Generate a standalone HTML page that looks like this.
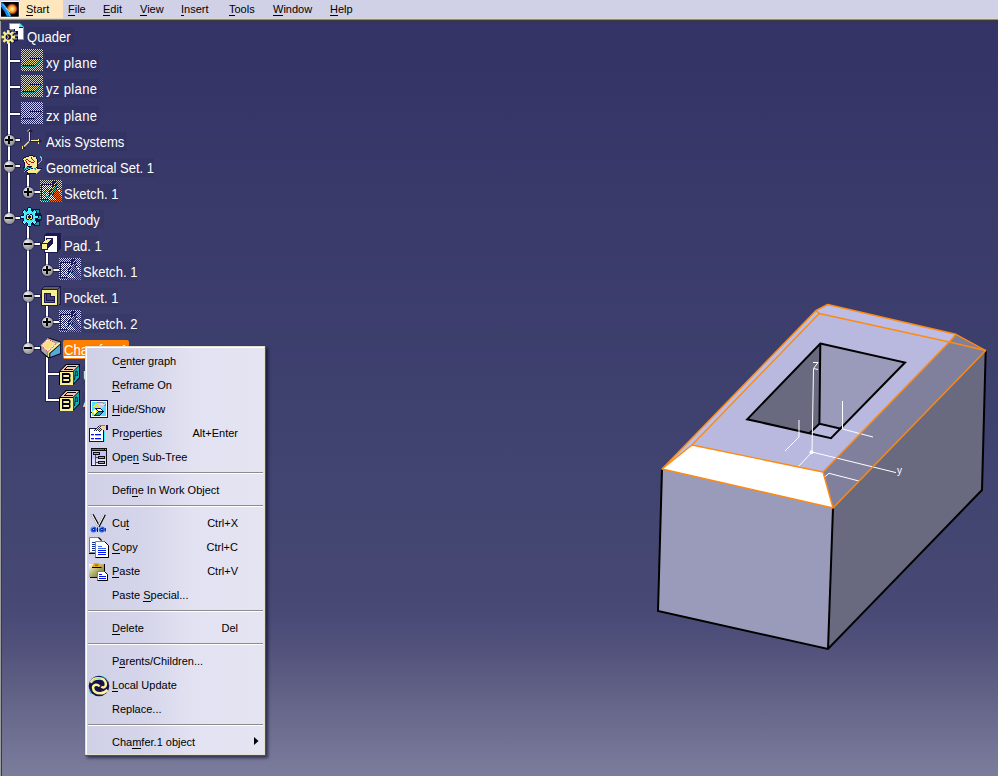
<!DOCTYPE html>
<html><head><meta charset="utf-8">
<style>
*{margin:0;padding:0;box-sizing:border-box}
html,body{width:998px;height:776px;overflow:hidden}
body{position:relative;font-family:"Liberation Sans",sans-serif;background:#333366}
.abs{position:absolute}
#menubar{position:absolute;left:0;top:0;width:998px;height:18px;background:#d0d0e6;font-size:11px;color:#000}
#menubar span{position:absolute;top:3px;white-space:pre}
#menubar u{text-decoration:none;border-bottom:1px solid #000}
#mb1{position:absolute;left:0;top:18px;width:998px;height:1px;background:#dcd8cc}
#mb2{position:absolute;left:0;top:19px;width:998px;height:1px;background:#8c8c88}
#mb3{position:absolute;left:0;top:20px;width:998px;height:1px;background:#3c3c3c}
#view{position:absolute;left:2px;top:21px;width:996px;height:755px;
 background:linear-gradient(to bottom,#333366 0px,#393a6a 179px,#3e406e 379px,#474974 579px,#4a4b77 599px,#52527c 629px,#646488 679px,#737396 725px,#7c7d9c 755px)}
#lb1{position:absolute;left:0;top:19px;width:1px;height:757px;background:#9c9c9c}
#lb2{position:absolute;left:1px;top:20px;width:1px;height:756px;background:#3c3c3c}
.tl{position:absolute;background:#fff}
.lbl{position:absolute;height:19px;background:rgba(0,0,20,0.06);color:#fff;font-size:15px;line-height:19px;white-space:pre}
.lbl .tx{position:absolute;left:1px;top:0;transform:scaleX(0.87);transform-origin:0 0}
.lbl.sel{background:#ff8000;border-radius:2px}
.lbl u{text-decoration:none;border-bottom:1px solid #fff}
.pl{letter-spacing:0.4px}
.tls{position:absolute;background:rgba(16,16,64,0.6)}
.node{position:absolute;width:11px;height:11px;border-radius:50%;background:radial-gradient(circle at 35% 30%,#f4f4f4 0%,#bcbcbc 35%,#8c8c8c 75%,#606060 100%);box-shadow:0 0 0 1px rgba(16,16,64,0.45)}
.node:before{content:"";position:absolute;left:1px;top:4px;width:8px;height:2px;background:#000}
.node.plus:after{content:"";position:absolute;left:4px;top:1px;width:2px;height:8px;background:#000}
#cm{position:absolute;left:85px;top:346px;width:181px;height:410px;background:#505050;box-shadow:2px 2px 3px rgba(0,0,30,0.6)}
#cmi{position:absolute;left:0;top:0;width:180px;height:409px;background:#e4e0d0}
#cmw{position:absolute;left:1px;top:1px;width:178px;height:407px;background:#fff}
#cmb{position:absolute;left:2px;top:2px;width:177px;height:406px;background:linear-gradient(to right,#d0d0e6 0%,#d4d4ea 30%,#e2e2f2 60%,#e4e4f2 100%)}
.mi{position:absolute;left:85px;width:180px;height:24px;font-size:11px;color:#000}
.mi .t{position:absolute;left:27px;top:6px;white-space:pre}
.mi .k{position:absolute;right:27px;top:6px;white-space:pre}
.mi u{text-decoration:none;border-bottom:1px solid #000}
.sep{position:absolute;left:88px;width:175px;height:2px;border-top:1px solid #8c8c8c;border-bottom:1px solid #fff}
</style></head><body>
<div id="view"></div>
<div id="lb1"></div><div id="lb2"></div>
<div id="menubar">
<svg class="abs" style="left:0;top:0" width="20" height="19" viewBox="0 0 20 19">
 <defs><radialGradient id="flame" cx="0.5" cy="0.5" r="0.5"><stop offset="0" stop-color="#fff4d0"/><stop offset="0.3" stop-color="#ffd040"/><stop offset="0.65" stop-color="#e87020"/><stop offset="0.9" stop-color="#802040" stop-opacity="0.6"/><stop offset="1" stop-color="#000" stop-opacity="0"/></radialGradient><clipPath id="lclip"><rect x="1" y="2" width="17.8" height="14.8"/></clipPath></defs>
 <rect x="0.5" y="1" width="19.3" height="17" rx="1.5" fill="#fff"/>
 <rect x="1" y="2" width="17.8" height="14.8" rx="0.5" fill="#000"/>
 <g clip-path="url(#lclip)">
 <circle cx="12" cy="9" r="6" fill="url(#flame)"/>
 <path d="M0.5,3.5 Q6,8 9.5,17.5" fill="none" stroke="#1888e8" stroke-width="4"/>
 <path d="M2.5,4 Q7,8.5 10,16" fill="none" stroke="#40c0ff" stroke-width="1.2"/>
 <path d="M6,8 Q8.5,10 10,12" fill="none" stroke="#fff0e0" stroke-width="1" opacity="0.7"/>
 </g>
</svg>
 <div class="abs" style="left:20px;top:0;width:43px;height:18px;background:#ffe6bc"></div>
 <span style="left:26px"><u>S</u>tart</span>
 <span style="left:68px"><u>F</u>ile</span>
 <span style="left:103px"><u>E</u>dit</span>
 <span style="left:140px"><u>V</u>iew</span>
 <span style="left:181px"><u>I</u>nsert</span>
 <span style="left:229px"><u>T</u>ools</span>
 <span style="left:273px"><u>W</u>indow</span>
 <span style="left:330px"><u>H</u>elp</span>
</div>
<div id="mb1"></div><div id="mb2"></div><div id="mb3"></div>

<!-- TREE -->
<svg width="0" height="0" style="position:absolute">
<defs>
<!--PIX-->
<pattern id="pG" width="2" height="2" patternUnits="userSpaceOnUse"><rect width="2" height="2" fill="#1c1c58"/><rect width="1" height="1" fill="#d4d4cc"/><rect x="1" y="1" width="1" height="1" fill="#d4d4cc"/></pattern><pattern id="pW" width="2" height="2" patternUnits="userSpaceOnUse"><rect width="2" height="2" fill="#1c1c58"/><rect width="1" height="1" fill="#ffffff"/><rect x="1" y="1" width="1" height="1" fill="#ffffff"/></pattern><pattern id="pY" width="2" height="2" patternUnits="userSpaceOnUse"><rect width="2" height="2" fill="#1c1c58"/><rect width="1" height="1" fill="#f4e070"/><rect x="1" y="1" width="1" height="1" fill="#f4e070"/></pattern><pattern id="pO" width="2" height="2" patternUnits="userSpaceOnUse"><rect width="2" height="2" fill="#1c1c58"/><rect width="1" height="1" fill="#ff7010"/><rect x="1" y="1" width="1" height="1" fill="#ff7010"/></pattern><pattern id="pC" width="2" height="2" patternUnits="userSpaceOnUse"><rect width="2" height="2" fill="#1c1c58"/><rect width="1" height="1" fill="#30c0c0"/><rect x="1" y="1" width="1" height="1" fill="#30c0c0"/></pattern><pattern id="pP" width="2" height="2" patternUnits="userSpaceOnUse"><rect width="2" height="2" fill="#303030"/><rect width="1" height="1" fill="#f8d0a8"/><rect x="1" y="1" width="1" height="1" fill="#f8d0a8"/></pattern>
<symbol id="i-plane" viewBox="0 0 22 22" shape-rendering="crispEdges"><rect x="0" y="0" width="22" height="1" fill="url(#pG)"/><rect x="0" y="1" width="22" height="1" fill="url(#pG)"/><rect x="0" y="2" width="22" height="1" fill="url(#pG)"/><rect x="0" y="3" width="22" height="1" fill="url(#pG)"/><rect x="0" y="4" width="22" height="1" fill="url(#pG)"/><rect x="0" y="5" width="22" height="1" fill="url(#pG)"/><rect x="0" y="6" width="22" height="1" fill="url(#pG)"/><rect x="0" y="7" width="22" height="1" fill="url(#pG)"/><rect x="0" y="8" width="22" height="1" fill="url(#pG)"/><rect x="0" y="9" width="8" height="1" fill="url(#pG)"/><rect x="8" y="9" width="13" height="1" fill="#1c1c58"/><rect x="21" y="9" width="1" height="1" fill="url(#pG)"/><rect x="0" y="10" width="7" height="1" fill="url(#pG)"/><rect x="7" y="10" width="1" height="1" fill="#1c1c58"/><rect x="8" y="10" width="11" height="1" fill="url(#pY)"/><rect x="19" y="10" width="1" height="1" fill="#1c1c58"/><rect x="20" y="10" width="1" height="1" fill="#30c8c8"/><rect x="21" y="10" width="1" height="1" fill="url(#pG)"/><rect x="0" y="11" width="6" height="1" fill="url(#pG)"/><rect x="6" y="11" width="1" height="1" fill="#1c1c58"/><rect x="7" y="11" width="11" height="1" fill="url(#pY)"/><rect x="18" y="11" width="1" height="1" fill="#1c1c58"/><rect x="19" y="11" width="1" height="1" fill="#30c8c8"/><rect x="20" y="11" width="2" height="1" fill="url(#pG)"/><rect x="0" y="12" width="5" height="1" fill="url(#pG)"/><rect x="5" y="12" width="1" height="1" fill="#1c1c58"/><rect x="6" y="12" width="11" height="1" fill="url(#pY)"/><rect x="17" y="12" width="1" height="1" fill="#1c1c58"/><rect x="18" y="12" width="1" height="1" fill="#30c8c8"/><rect x="19" y="12" width="3" height="1" fill="url(#pG)"/><rect x="0" y="13" width="4" height="1" fill="url(#pG)"/><rect x="4" y="13" width="1" height="1" fill="#1c1c58"/><rect x="5" y="13" width="11" height="1" fill="url(#pY)"/><rect x="16" y="13" width="1" height="1" fill="#1c1c58"/><rect x="17" y="13" width="1" height="1" fill="#30c8c8"/><rect x="18" y="13" width="4" height="1" fill="url(#pG)"/><rect x="0" y="14" width="3" height="1" fill="url(#pG)"/><rect x="3" y="14" width="1" height="1" fill="#1c1c58"/><rect x="4" y="14" width="11" height="1" fill="url(#pY)"/><rect x="15" y="14" width="1" height="1" fill="#1c1c58"/><rect x="16" y="14" width="1" height="1" fill="#30c8c8"/><rect x="17" y="14" width="5" height="1" fill="url(#pG)"/><rect x="0" y="15" width="2" height="1" fill="url(#pG)"/><rect x="2" y="15" width="1" height="1" fill="#1c1c58"/><rect x="3" y="15" width="11" height="1" fill="url(#pY)"/><rect x="14" y="15" width="1" height="1" fill="#1c1c58"/><rect x="15" y="15" width="1" height="1" fill="#30c8c8"/><rect x="16" y="15" width="6" height="1" fill="url(#pG)"/><rect x="0" y="16" width="1" height="1" fill="url(#pG)"/><rect x="1" y="16" width="13" height="1" fill="#1c1c58"/><rect x="14" y="16" width="1" height="1" fill="#30c8c8"/><rect x="15" y="16" width="7" height="1" fill="url(#pG)"/><rect x="0" y="17" width="1" height="1" fill="url(#pG)"/><rect x="1" y="17" width="12" height="1" fill="url(#pC)"/><rect x="13" y="17" width="1" height="1" fill="#30c8c8"/><rect x="14" y="17" width="8" height="1" fill="url(#pG)"/><rect x="0" y="18" width="22" height="1" fill="url(#pG)"/><rect x="0" y="19" width="22" height="1" fill="url(#pG)"/><rect x="0" y="20" width="22" height="1" fill="url(#pG)"/><rect x="0" y="21" width="22" height="1" fill="url(#pG)"/></symbol>
<symbol id="i-sketch" viewBox="0 0 22 22" shape-rendering="crispEdges"><rect x="0" y="0" width="22" height="1" fill="url(#pG)"/><rect x="0" y="1" width="13" height="1" fill="url(#pG)"/><rect x="13" y="1" width="4" height="1" fill="#1c1c58"/><rect x="17" y="1" width="5" height="1" fill="url(#pG)"/><rect x="0" y="2" width="12" height="1" fill="url(#pG)"/><rect x="12" y="2" width="4" height="1" fill="#1c1c58"/><rect x="16" y="2" width="6" height="1" fill="url(#pG)"/><rect x="0" y="3" width="13" height="1" fill="url(#pG)"/><rect x="13" y="3" width="2" height="1" fill="#1c1c58"/><rect x="15" y="3" width="1" height="1" fill="#f4e070"/><rect x="16" y="3" width="1" height="1" fill="#1c1c58"/><rect x="17" y="3" width="1" height="1" fill="#30c8c8"/><rect x="18" y="3" width="4" height="1" fill="url(#pG)"/><rect x="0" y="4" width="1" height="1" fill="url(#pG)"/><rect x="1" y="4" width="13" height="1" fill="#1c1c58"/><rect x="14" y="4" width="1" height="1" fill="#f4e070"/><rect x="15" y="4" width="2" height="1" fill="#1c1c58"/><rect x="17" y="4" width="5" height="1" fill="url(#pG)"/><rect x="0" y="5" width="1" height="1" fill="url(#pG)"/><rect x="1" y="5" width="1" height="1" fill="#1c1c58"/><rect x="2" y="5" width="10" height="1" fill="url(#pW)"/><rect x="12" y="5" width="5" height="1" fill="#1c1c58"/><rect x="17" y="5" width="5" height="1" fill="url(#pG)"/><rect x="0" y="6" width="1" height="1" fill="url(#pG)"/><rect x="1" y="6" width="1" height="1" fill="#1c1c58"/><rect x="2" y="6" width="10" height="1" fill="url(#pW)"/><rect x="12" y="6" width="2" height="1" fill="#1c1c58"/><rect x="14" y="6" width="1" height="1" fill="#f4e070"/><rect x="15" y="6" width="1" height="1" fill="#1c1c58"/><rect x="16" y="6" width="1" height="1" fill="#30c8c8"/><rect x="17" y="6" width="1" height="1" fill="#1c1c58"/><rect x="18" y="6" width="4" height="1" fill="url(#pG)"/><rect x="0" y="7" width="1" height="1" fill="url(#pG)"/><rect x="1" y="7" width="1" height="1" fill="#1c1c58"/><rect x="2" y="7" width="10" height="1" fill="url(#pW)"/><rect x="12" y="7" width="1" height="1" fill="#1c1c58"/><rect x="13" y="7" width="1" height="1" fill="#f4e070"/><rect x="14" y="7" width="1" height="1" fill="#1c1c58"/><rect x="15" y="7" width="1" height="1" fill="#30c8c8"/><rect x="16" y="7" width="2" height="1" fill="#1c1c58"/><rect x="18" y="7" width="4" height="1" fill="url(#pG)"/><rect x="0" y="8" width="1" height="1" fill="url(#pG)"/><rect x="1" y="8" width="1" height="1" fill="#1c1c58"/><rect x="2" y="8" width="9" height="1" fill="url(#pW)"/><rect x="11" y="8" width="1" height="1" fill="#1c1c58"/><rect x="12" y="8" width="1" height="1" fill="#f4e070"/><rect x="13" y="8" width="1" height="1" fill="#1c1c58"/><rect x="14" y="8" width="1" height="1" fill="#30c8c8"/><rect x="15" y="8" width="2" height="1" fill="#1c1c58"/><rect x="17" y="8" width="1" height="1" fill="#ffffff"/><rect x="18" y="8" width="4" height="1" fill="url(#pG)"/><rect x="0" y="9" width="1" height="1" fill="url(#pG)"/><rect x="1" y="9" width="1" height="1" fill="#1c1c58"/><rect x="2" y="9" width="5" height="1" fill="url(#pW)"/><rect x="7" y="9" width="1" height="1" fill="#30c8c8"/><rect x="8" y="9" width="2" height="1" fill="url(#pW)"/><rect x="10" y="9" width="3" height="1" fill="#1c1c58"/><rect x="13" y="9" width="1" height="1" fill="#30c8c8"/><rect x="14" y="9" width="1" height="1" fill="#1c1c58"/><rect x="15" y="9" width="7" height="1" fill="url(#pO)"/><rect x="0" y="10" width="1" height="1" fill="url(#pG)"/><rect x="1" y="10" width="1" height="1" fill="#1c1c58"/><rect x="2" y="10" width="4" height="1" fill="url(#pW)"/><rect x="6" y="10" width="1" height="1" fill="#f4e070"/><rect x="7" y="10" width="1" height="1" fill="url(#pW)"/><rect x="8" y="10" width="1" height="1" fill="#f4e070"/><rect x="9" y="10" width="1" height="1" fill="url(#pW)"/><rect x="10" y="10" width="2" height="1" fill="#1c1c58"/><rect x="12" y="10" width="1" height="1" fill="#f4e070"/><rect x="13" y="10" width="1" height="1" fill="#1c1c58"/><rect x="14" y="10" width="1" height="1" fill="#30c8c8"/><rect x="15" y="10" width="3" height="1" fill="url(#pO)"/><rect x="18" y="10" width="2" height="1" fill="#ffffff"/><rect x="20" y="10" width="2" height="1" fill="url(#pO)"/><rect x="0" y="11" width="1" height="1" fill="url(#pG)"/><rect x="1" y="11" width="1" height="1" fill="#1c1c58"/><rect x="2" y="11" width="3" height="1" fill="url(#pW)"/><rect x="5" y="11" width="1" height="1" fill="#30c8c8"/><rect x="6" y="11" width="3" height="1" fill="url(#pW)"/><rect x="9" y="11" width="2" height="1" fill="#1c1c58"/><rect x="11" y="11" width="1" height="1" fill="#f4e070"/><rect x="12" y="11" width="1" height="1" fill="#1c1c58"/><rect x="13" y="11" width="1" height="1" fill="#30c8c8"/><rect x="14" y="11" width="1" height="1" fill="#1c1c58"/><rect x="15" y="11" width="4" height="1" fill="url(#pO)"/><rect x="19" y="11" width="3" height="1" fill="url(#pG)"/><rect x="0" y="12" width="1" height="1" fill="url(#pG)"/><rect x="1" y="12" width="1" height="1" fill="#1c1c58"/><rect x="2" y="12" width="2" height="1" fill="url(#pW)"/><rect x="4" y="12" width="1" height="1" fill="#30c8c8"/><rect x="5" y="12" width="4" height="1" fill="url(#pW)"/><rect x="9" y="12" width="1" height="1" fill="#1c1c58"/><rect x="10" y="12" width="1" height="1" fill="#f4e070"/><rect x="11" y="12" width="1" height="1" fill="#1c1c58"/><rect x="12" y="12" width="1" height="1" fill="#30c8c8"/><rect x="13" y="12" width="1" height="1" fill="#1c1c58"/><rect x="14" y="12" width="5" height="1" fill="url(#pO)"/><rect x="19" y="12" width="3" height="1" fill="url(#pG)"/><rect x="0" y="13" width="1" height="1" fill="url(#pG)"/><rect x="1" y="13" width="1" height="1" fill="#1c1c58"/><rect x="2" y="13" width="7" height="1" fill="url(#pW)"/><rect x="9" y="13" width="3" height="1" fill="#1c1c58"/><rect x="12" y="13" width="1" height="1" fill="#30c8c8"/><rect x="13" y="13" width="1" height="1" fill="#1c1c58"/><rect x="14" y="13" width="5" height="1" fill="url(#pO)"/><rect x="19" y="13" width="3" height="1" fill="url(#pG)"/><rect x="0" y="14" width="1" height="1" fill="url(#pG)"/><rect x="1" y="14" width="1" height="1" fill="#1c1c58"/><rect x="2" y="14" width="2" height="1" fill="url(#pW)"/><rect x="4" y="14" width="1" height="1" fill="#f4e070"/><rect x="5" y="14" width="4" height="1" fill="url(#pW)"/><rect x="9" y="14" width="2" height="1" fill="#1c1c58"/><rect x="11" y="14" width="1" height="1" fill="#30c8c8"/><rect x="12" y="14" width="1" height="1" fill="#1c1c58"/><rect x="13" y="14" width="6" height="1" fill="url(#pO)"/><rect x="19" y="14" width="3" height="1" fill="url(#pG)"/><rect x="0" y="15" width="1" height="1" fill="url(#pG)"/><rect x="1" y="15" width="1" height="1" fill="#1c1c58"/><rect x="2" y="15" width="3" height="1" fill="url(#pW)"/><rect x="5" y="15" width="2" height="1" fill="#30c8c8"/><rect x="7" y="15" width="1" height="1" fill="url(#pW)"/><rect x="8" y="15" width="2" height="1" fill="#1c1c58"/><rect x="10" y="15" width="1" height="1" fill="#30c8c8"/><rect x="11" y="15" width="2" height="1" fill="url(#pW)"/><rect x="13" y="15" width="8" height="1" fill="url(#pO)"/><rect x="21" y="15" width="1" height="1" fill="url(#pG)"/><rect x="0" y="16" width="1" height="1" fill="url(#pG)"/><rect x="1" y="16" width="1" height="1" fill="#1c1c58"/><rect x="2" y="16" width="4" height="1" fill="url(#pW)"/><rect x="6" y="16" width="1" height="1" fill="#30c8c8"/><rect x="7" y="16" width="1" height="1" fill="url(#pW)"/><rect x="8" y="16" width="1" height="1" fill="#30c8c8"/><rect x="9" y="16" width="5" height="1" fill="url(#pW)"/><rect x="14" y="16" width="7" height="1" fill="url(#pO)"/><rect x="21" y="16" width="1" height="1" fill="url(#pG)"/><rect x="0" y="17" width="1" height="1" fill="url(#pG)"/><rect x="1" y="17" width="1" height="1" fill="#1c1c58"/><rect x="2" y="17" width="5" height="1" fill="url(#pW)"/><rect x="7" y="17" width="1" height="1" fill="#f4e070"/><rect x="8" y="17" width="7" height="1" fill="url(#pW)"/><rect x="15" y="17" width="6" height="1" fill="url(#pO)"/><rect x="21" y="17" width="1" height="1" fill="url(#pG)"/><rect x="0" y="18" width="1" height="1" fill="url(#pG)"/><rect x="1" y="18" width="1" height="1" fill="#1c1c58"/><rect x="2" y="18" width="14" height="1" fill="url(#pW)"/><rect x="16" y="18" width="5" height="1" fill="url(#pO)"/><rect x="21" y="18" width="1" height="1" fill="url(#pG)"/><rect x="0" y="19" width="1" height="1" fill="url(#pG)"/><rect x="1" y="19" width="8" height="1" fill="#1c1c58"/><rect x="9" y="19" width="7" height="1" fill="url(#pW)"/><rect x="16" y="19" width="6" height="1" fill="url(#pO)"/><rect x="0" y="20" width="1" height="1" fill="url(#pG)"/><rect x="1" y="20" width="1" height="1" fill="#1c1c58"/><rect x="2" y="20" width="1" height="1" fill="url(#pC)"/><rect x="3" y="20" width="1" height="1" fill="#1c1c58"/><rect x="4" y="20" width="1" height="1" fill="url(#pC)"/><rect x="5" y="20" width="1" height="1" fill="#1c1c58"/><rect x="6" y="20" width="1" height="1" fill="url(#pC)"/><rect x="7" y="20" width="1" height="1" fill="#1c1c58"/><rect x="8" y="20" width="1" height="1" fill="url(#pC)"/><rect x="9" y="20" width="1" height="1" fill="#1c1c58"/><rect x="10" y="20" width="12" height="1" fill="url(#pO)"/><rect x="0" y="21" width="9" height="1" fill="url(#pG)"/><rect x="9" y="21" width="13" height="1" fill="url(#pO)"/></symbol>
<symbol id="i-geo" viewBox="0 0 22 22" shape-rendering="crispEdges"><rect x="8" y="1" width="4" height="1" fill="#101048"/><rect x="5" y="2" width="3" height="1" fill="#101048"/><rect x="8" y="2" width="4" height="1" fill="#f8e890"/><rect x="12" y="2" width="2" height="1" fill="#101048"/><rect x="19" y="2" width="1" height="1" fill="#40e0f0"/><rect x="3" y="3" width="2" height="1" fill="#101048"/><rect x="5" y="3" width="5" height="1" fill="#f8e890"/><rect x="10" y="3" width="1" height="1" fill="#b01010"/><rect x="11" y="3" width="4" height="1" fill="#f8e890"/><rect x="15" y="3" width="1" height="1" fill="#101048"/><rect x="19" y="3" width="2" height="1" fill="#40e0f0"/><rect x="2" y="4" width="1" height="1" fill="#101048"/><rect x="3" y="4" width="7" height="1" fill="#f8e890"/><rect x="10" y="4" width="1" height="1" fill="#b01010"/><rect x="11" y="4" width="4" height="1" fill="#f8e890"/><rect x="15" y="4" width="1" height="1" fill="#101048"/><rect x="20" y="4" width="1" height="1" fill="#40e0f0"/><rect x="1" y="5" width="1" height="1" fill="#101048"/><rect x="2" y="5" width="3" height="1" fill="#f8e890"/><rect x="5" y="5" width="2" height="1" fill="#b01010"/><rect x="7" y="5" width="4" height="1" fill="#f8e890"/><rect x="11" y="5" width="1" height="1" fill="#b01010"/><rect x="12" y="5" width="4" height="1" fill="#f8e890"/><rect x="16" y="5" width="1" height="1" fill="#101048"/><rect x="20" y="5" width="1" height="1" fill="#40e0f0"/><rect x="2" y="6" width="1" height="1" fill="#101048"/><rect x="3" y="6" width="1" height="1" fill="#f8e890"/><rect x="4" y="6" width="1" height="1" fill="#b01010"/><rect x="5" y="6" width="2" height="1" fill="#f8e890"/><rect x="7" y="6" width="1" height="1" fill="#b01010"/><rect x="8" y="6" width="4" height="1" fill="#f8e890"/><rect x="12" y="6" width="1" height="1" fill="#b01010"/><rect x="13" y="6" width="3" height="1" fill="#f8e890"/><rect x="16" y="6" width="1" height="1" fill="#101048"/><rect x="20" y="6" width="1" height="1" fill="#40e0f0"/><rect x="2" y="7" width="1" height="1" fill="#101048"/><rect x="3" y="7" width="2" height="1" fill="#f8e890"/><rect x="5" y="7" width="1" height="1" fill="#b01010"/><rect x="6" y="7" width="2" height="1" fill="#f8e890"/><rect x="8" y="7" width="2" height="1" fill="#b01010"/><rect x="10" y="7" width="3" height="1" fill="#f8e890"/><rect x="13" y="7" width="1" height="1" fill="#b01010"/><rect x="14" y="7" width="2" height="1" fill="#f8e890"/><rect x="16" y="7" width="1" height="1" fill="#101048"/><rect x="19" y="7" width="1" height="1" fill="#40e0f0"/><rect x="3" y="8" width="1" height="1" fill="#101048"/><rect x="4" y="8" width="1" height="1" fill="#f8e890"/><rect x="5" y="8" width="1" height="1" fill="#b01010"/><rect x="6" y="8" width="4" height="1" fill="#f8e890"/><rect x="10" y="8" width="3" height="1" fill="#b01010"/><rect x="13" y="8" width="3" height="1" fill="#f8e890"/><rect x="16" y="8" width="1" height="1" fill="#101048"/><rect x="18" y="8" width="1" height="1" fill="#40e0f0"/><rect x="3" y="9" width="1" height="1" fill="#101048"/><rect x="4" y="9" width="2" height="1" fill="#f8e890"/><rect x="6" y="9" width="1" height="1" fill="#b01010"/><rect x="7" y="9" width="9" height="1" fill="#f8e890"/><rect x="16" y="9" width="1" height="1" fill="#101048"/><rect x="17" y="9" width="1" height="1" fill="#40e0f0"/><rect x="3" y="10" width="1" height="1" fill="#101048"/><rect x="4" y="10" width="3" height="1" fill="#f8e890"/><rect x="7" y="10" width="2" height="1" fill="#b01010"/><rect x="9" y="10" width="7" height="1" fill="#f8e890"/><rect x="16" y="10" width="1" height="1" fill="#101048"/><rect x="3" y="11" width="1" height="1" fill="#101048"/><rect x="4" y="11" width="12" height="1" fill="#f8e890"/><rect x="16" y="11" width="1" height="1" fill="#101048"/><rect x="3" y="12" width="1" height="1" fill="#101048"/><rect x="4" y="12" width="2" height="1" fill="#f8e890"/><rect x="6" y="12" width="5" height="1" fill="#101048"/><rect x="11" y="12" width="5" height="1" fill="#f8e890"/><rect x="16" y="12" width="1" height="1" fill="#101048"/><rect x="2" y="13" width="2" height="1" fill="#101048"/><rect x="4" y="13" width="1" height="1" fill="#f8e890"/><rect x="5" y="13" width="3" height="1" fill="#20a8b0"/><rect x="8" y="13" width="2" height="1" fill="#101048"/><rect x="10" y="13" width="1" height="1" fill="#40e0f0"/><rect x="11" y="13" width="4" height="1" fill="#f8e890"/><rect x="15" y="13" width="2" height="1" fill="#101048"/><rect x="2" y="14" width="1" height="1" fill="#101048"/><rect x="3" y="14" width="3" height="1" fill="#20a8b0"/><rect x="6" y="14" width="1" height="1" fill="#101048"/><rect x="7" y="14" width="3" height="1" fill="#40e0f0"/><rect x="10" y="14" width="2" height="1" fill="#101048"/><rect x="12" y="14" width="1" height="1" fill="#f8e890"/><rect x="13" y="14" width="2" height="1" fill="#20a8b0"/><rect x="15" y="14" width="1" height="1" fill="#f8e890"/><rect x="16" y="14" width="5" height="1" fill="#101048"/><rect x="3" y="15" width="1" height="1" fill="#20a8b0"/><rect x="4" y="15" width="1" height="1" fill="#101048"/><rect x="5" y="15" width="2" height="1" fill="#40e0f0"/><rect x="7" y="15" width="2" height="1" fill="#101048"/><rect x="9" y="15" width="5" height="1" fill="#f8e890"/><rect x="14" y="15" width="1" height="1" fill="#20a8b0"/><rect x="15" y="15" width="4" height="1" fill="#f8e890"/><rect x="19" y="15" width="1" height="1" fill="#40e0f0"/><rect x="3" y="16" width="1" height="1" fill="#101048"/><rect x="4" y="16" width="1" height="1" fill="#40e0f0"/><rect x="5" y="16" width="2" height="1" fill="#101048"/><rect x="7" y="16" width="11" height="1" fill="#f8e890"/><rect x="18" y="16" width="1" height="1" fill="#40e0f0"/><rect x="3" y="17" width="1" height="1" fill="#40e0f0"/><rect x="4" y="17" width="1" height="1" fill="#101048"/><rect x="6" y="17" width="11" height="1" fill="#f8e890"/><rect x="17" y="17" width="1" height="1" fill="#40e0f0"/><rect x="6" y="18" width="1" height="1" fill="#101048"/><rect x="7" y="18" width="9" height="1" fill="#f8e890"/><rect x="16" y="18" width="1" height="1" fill="#40e0f0"/><rect x="6" y="19" width="9" height="1" fill="#101048"/><rect x="15" y="19" width="1" height="1" fill="#40e0f0"/></symbol>
<symbol id="i-pb" viewBox="0 0 22 22" shape-rendering="crispEdges"><rect x="7" y="1" width="3" height="1" fill="#101040"/><rect x="6" y="2" width="1" height="1" fill="#101040"/><rect x="7" y="2" width="1" height="1" fill="#40e8f8"/><rect x="8" y="2" width="1" height="1" fill="#f8f000"/><rect x="9" y="2" width="1" height="1" fill="#40e8f8"/><rect x="10" y="2" width="1" height="1" fill="#101040"/><rect x="3" y="3" width="1" height="1" fill="#101040"/><rect x="6" y="3" width="1" height="1" fill="#101040"/><rect x="7" y="3" width="1" height="1" fill="#f8f000"/><rect x="8" y="3" width="1" height="1" fill="#40e8f8"/><rect x="9" y="3" width="1" height="1" fill="#f8f000"/><rect x="10" y="3" width="9" height="1" fill="#101040"/><rect x="2" y="4" width="1" height="1" fill="#101040"/><rect x="3" y="4" width="1" height="1" fill="#40e8f8"/><rect x="4" y="4" width="1" height="1" fill="#101040"/><rect x="6" y="4" width="1" height="1" fill="#101040"/><rect x="7" y="4" width="3" height="1" fill="#40e8f8"/><rect x="10" y="4" width="3" height="1" fill="#101040"/><rect x="13" y="4" width="1" height="1" fill="#40e8f8"/><rect x="14" y="4" width="1" height="1" fill="#101040"/><rect x="15" y="4" width="3" height="1" fill="#10a0a8"/><rect x="18" y="4" width="1" height="1" fill="#101040"/><rect x="1" y="5" width="1" height="1" fill="#101040"/><rect x="2" y="5" width="3" height="1" fill="#40e8f8"/><rect x="5" y="5" width="1" height="1" fill="#101040"/><rect x="6" y="5" width="1" height="1" fill="#40e8f8"/><rect x="7" y="5" width="1" height="1" fill="#f8f000"/><rect x="8" y="5" width="1" height="1" fill="#40e8f8"/><rect x="9" y="5" width="1" height="1" fill="#f8f000"/><rect x="10" y="5" width="1" height="1" fill="#40e8f8"/><rect x="11" y="5" width="1" height="1" fill="#101040"/><rect x="12" y="5" width="3" height="1" fill="#40e8f8"/><rect x="15" y="5" width="1" height="1" fill="#101040"/><rect x="16" y="5" width="2" height="1" fill="#10a0a8"/><rect x="18" y="5" width="1" height="1" fill="#101040"/><rect x="1" y="6" width="1" height="1" fill="#101040"/><rect x="2" y="6" width="1" height="1" fill="#f8f000"/><rect x="3" y="6" width="11" height="1" fill="#40e8f8"/><rect x="14" y="6" width="1" height="1" fill="#f8f000"/><rect x="15" y="6" width="1" height="1" fill="#101040"/><rect x="16" y="6" width="2" height="1" fill="#10a0a8"/><rect x="18" y="6" width="1" height="1" fill="#101040"/><rect x="2" y="7" width="1" height="1" fill="#101040"/><rect x="3" y="7" width="1" height="1" fill="#f8f000"/><rect x="4" y="7" width="9" height="1" fill="#40e8f8"/><rect x="13" y="7" width="1" height="1" fill="#f8f000"/><rect x="14" y="7" width="6" height="1" fill="#101040"/><rect x="2" y="8" width="1" height="1" fill="#101040"/><rect x="3" y="8" width="3" height="1" fill="#40e8f8"/><rect x="6" y="8" width="2" height="1" fill="#101040"/><rect x="8" y="8" width="1" height="1" fill="#f8f000"/><rect x="9" y="8" width="2" height="1" fill="#101040"/><rect x="11" y="8" width="3" height="1" fill="#40e8f8"/><rect x="14" y="8" width="6" height="1" fill="#101040"/><rect x="0" y="9" width="3" height="1" fill="#101040"/><rect x="3" y="9" width="1" height="1" fill="#f8f000"/><rect x="4" y="9" width="1" height="1" fill="#40e8f8"/><rect x="5" y="9" width="1" height="1" fill="#101040"/><rect x="6" y="9" width="2" height="1" fill="#f8f000"/><rect x="8" y="9" width="1" height="1" fill="#101040"/><rect x="9" y="9" width="2" height="1" fill="#f8f000"/><rect x="11" y="9" width="1" height="1" fill="#101040"/><rect x="12" y="9" width="1" height="1" fill="#40e8f8"/><rect x="13" y="9" width="1" height="1" fill="#f8f000"/><rect x="14" y="9" width="7" height="1" fill="#101040"/><rect x="0" y="10" width="1" height="1" fill="#f8f000"/><rect x="1" y="10" width="1" height="1" fill="#40e8f8"/><rect x="2" y="10" width="1" height="1" fill="#f8f000"/><rect x="3" y="10" width="2" height="1" fill="#40e8f8"/><rect x="5" y="10" width="1" height="1" fill="#101040"/><rect x="6" y="10" width="1" height="1" fill="#f8f000"/><rect x="7" y="10" width="3" height="1" fill="#101040"/><rect x="10" y="10" width="1" height="1" fill="#f8f000"/><rect x="11" y="10" width="1" height="1" fill="#101040"/><rect x="12" y="10" width="2" height="1" fill="#40e8f8"/><rect x="14" y="10" width="1" height="1" fill="#f8f000"/><rect x="15" y="10" width="1" height="1" fill="#40e8f8"/><rect x="16" y="10" width="1" height="1" fill="#f8f000"/><rect x="17" y="10" width="1" height="1" fill="#101040"/><rect x="18" y="10" width="2" height="1" fill="#10a0a8"/><rect x="20" y="10" width="1" height="1" fill="#101040"/><rect x="0" y="11" width="1" height="1" fill="#40e8f8"/><rect x="1" y="11" width="1" height="1" fill="#f8f000"/><rect x="2" y="11" width="1" height="1" fill="#40e8f8"/><rect x="3" y="11" width="1" height="1" fill="#f8f000"/><rect x="4" y="11" width="1" height="1" fill="#40e8f8"/><rect x="5" y="11" width="1" height="1" fill="#101040"/><rect x="6" y="11" width="1" height="1" fill="#f8f000"/><rect x="7" y="11" width="3" height="1" fill="#101040"/><rect x="10" y="11" width="1" height="1" fill="#f8f000"/><rect x="11" y="11" width="1" height="1" fill="#101040"/><rect x="12" y="11" width="1" height="1" fill="#40e8f8"/><rect x="13" y="11" width="1" height="1" fill="#f8f000"/><rect x="14" y="11" width="1" height="1" fill="#40e8f8"/><rect x="15" y="11" width="1" height="1" fill="#f8f000"/><rect x="16" y="11" width="1" height="1" fill="#40e8f8"/><rect x="17" y="11" width="1" height="1" fill="#101040"/><rect x="18" y="11" width="2" height="1" fill="#10a0a8"/><rect x="20" y="11" width="1" height="1" fill="#101040"/><rect x="0" y="12" width="3" height="1" fill="#101040"/><rect x="3" y="12" width="2" height="1" fill="#40e8f8"/><rect x="5" y="12" width="1" height="1" fill="#101040"/><rect x="6" y="12" width="2" height="1" fill="#f8f000"/><rect x="8" y="12" width="1" height="1" fill="#101040"/><rect x="9" y="12" width="2" height="1" fill="#f8f000"/><rect x="11" y="12" width="1" height="1" fill="#101040"/><rect x="12" y="12" width="2" height="1" fill="#40e8f8"/><rect x="14" y="12" width="3" height="1" fill="#101040"/><rect x="17" y="12" width="3" height="1" fill="#10a0a8"/><rect x="20" y="12" width="1" height="1" fill="#101040"/><rect x="2" y="13" width="1" height="1" fill="#101040"/><rect x="3" y="13" width="1" height="1" fill="#f8f000"/><rect x="4" y="13" width="2" height="1" fill="#40e8f8"/><rect x="6" y="13" width="2" height="1" fill="#101040"/><rect x="8" y="13" width="1" height="1" fill="#f8f000"/><rect x="9" y="13" width="2" height="1" fill="#101040"/><rect x="11" y="13" width="2" height="1" fill="#40e8f8"/><rect x="13" y="13" width="1" height="1" fill="#f8f000"/><rect x="14" y="13" width="7" height="1" fill="#101040"/><rect x="2" y="14" width="1" height="1" fill="#101040"/><rect x="3" y="14" width="1" height="1" fill="#40e8f8"/><rect x="4" y="14" width="1" height="1" fill="#f8f000"/><rect x="5" y="14" width="7" height="1" fill="#40e8f8"/><rect x="12" y="14" width="1" height="1" fill="#f8f000"/><rect x="13" y="14" width="1" height="1" fill="#40e8f8"/><rect x="14" y="14" width="6" height="1" fill="#101040"/><rect x="1" y="15" width="1" height="1" fill="#101040"/><rect x="2" y="15" width="3" height="1" fill="#40e8f8"/><rect x="5" y="15" width="1" height="1" fill="#f8f000"/><rect x="6" y="15" width="5" height="1" fill="#40e8f8"/><rect x="11" y="15" width="1" height="1" fill="#f8f000"/><rect x="12" y="15" width="3" height="1" fill="#40e8f8"/><rect x="15" y="15" width="4" height="1" fill="#101040"/><rect x="1" y="16" width="1" height="1" fill="#101040"/><rect x="2" y="16" width="1" height="1" fill="#f8f000"/><rect x="3" y="16" width="1" height="1" fill="#40e8f8"/><rect x="4" y="16" width="1" height="1" fill="#f8f000"/><rect x="5" y="16" width="1" height="1" fill="#101040"/><rect x="6" y="16" width="1" height="1" fill="#f8f000"/><rect x="7" y="16" width="1" height="1" fill="#40e8f8"/><rect x="8" y="16" width="1" height="1" fill="#f8f000"/><rect x="9" y="16" width="1" height="1" fill="#40e8f8"/><rect x="10" y="16" width="1" height="1" fill="#f8f000"/><rect x="11" y="16" width="1" height="1" fill="#101040"/><rect x="12" y="16" width="1" height="1" fill="#f8f000"/><rect x="13" y="16" width="1" height="1" fill="#40e8f8"/><rect x="14" y="16" width="1" height="1" fill="#f8f000"/><rect x="15" y="16" width="1" height="1" fill="#101040"/><rect x="16" y="16" width="2" height="1" fill="#10a0a8"/><rect x="18" y="16" width="1" height="1" fill="#101040"/><rect x="2" y="17" width="1" height="1" fill="#101040"/><rect x="3" y="17" width="1" height="1" fill="#f8f000"/><rect x="4" y="17" width="1" height="1" fill="#101040"/><rect x="6" y="17" width="1" height="1" fill="#101040"/><rect x="7" y="17" width="1" height="1" fill="#f8f000"/><rect x="8" y="17" width="1" height="1" fill="#40e8f8"/><rect x="9" y="17" width="1" height="1" fill="#f8f000"/><rect x="10" y="17" width="3" height="1" fill="#101040"/><rect x="13" y="17" width="1" height="1" fill="#f8f000"/><rect x="14" y="17" width="1" height="1" fill="#101040"/><rect x="15" y="17" width="3" height="1" fill="#10a0a8"/><rect x="18" y="17" width="1" height="1" fill="#101040"/><rect x="3" y="18" width="1" height="1" fill="#101040"/><rect x="6" y="18" width="1" height="1" fill="#101040"/><rect x="7" y="18" width="3" height="1" fill="#40e8f8"/><rect x="10" y="18" width="4" height="1" fill="#101040"/><rect x="14" y="18" width="4" height="1" fill="#10a0a8"/><rect x="18" y="18" width="1" height="1" fill="#101040"/><rect x="6" y="19" width="1" height="1" fill="#101040"/><rect x="7" y="19" width="1" height="1" fill="#f8f000"/><rect x="8" y="19" width="1" height="1" fill="#40e8f8"/><rect x="9" y="19" width="1" height="1" fill="#f8f000"/><rect x="10" y="19" width="1" height="1" fill="#101040"/><rect x="13" y="19" width="6" height="1" fill="#101040"/><rect x="7" y="20" width="3" height="1" fill="#101040"/></symbol>
<symbol id="i-hide" viewBox="0 0 20 20" shape-rendering="crispEdges"><rect x="1" y="1" width="18" height="1" fill="#101058"/><rect x="1" y="2" width="1" height="1" fill="#101058"/><rect x="2" y="2" width="16" height="1" fill="#ffffff"/><rect x="18" y="2" width="1" height="1" fill="#101058"/><rect x="1" y="3" width="1" height="1" fill="#101058"/><rect x="2" y="3" width="1" height="1" fill="#ffffff"/><rect x="3" y="3" width="5" height="1" fill="#50e0f8"/><rect x="8" y="3" width="6" height="1" fill="#909098"/><rect x="14" y="3" width="3" height="1" fill="#50e0f8"/><rect x="17" y="3" width="1" height="1" fill="#ffffff"/><rect x="18" y="3" width="1" height="1" fill="#101058"/><rect x="1" y="4" width="1" height="1" fill="#101058"/><rect x="2" y="4" width="1" height="1" fill="#ffffff"/><rect x="3" y="4" width="5" height="1" fill="#50e0f8"/><rect x="8" y="4" width="1" height="1" fill="#f8f000"/><rect x="9" y="4" width="1" height="1" fill="#c8c8f0"/><rect x="10" y="4" width="4" height="1" fill="#f8f000"/><rect x="14" y="4" width="1" height="1" fill="#909098"/><rect x="15" y="4" width="2" height="1" fill="#50e0f8"/><rect x="17" y="4" width="1" height="1" fill="#ffffff"/><rect x="18" y="4" width="1" height="1" fill="#101058"/><rect x="1" y="5" width="1" height="1" fill="#101058"/><rect x="2" y="5" width="1" height="1" fill="#ffffff"/><rect x="3" y="5" width="3" height="1" fill="#50e0f8"/><rect x="6" y="5" width="2" height="1" fill="#f8f000"/><rect x="8" y="5" width="3" height="1" fill="#c8c8f0"/><rect x="11" y="5" width="5" height="1" fill="#e8e8f8"/><rect x="16" y="5" width="1" height="1" fill="#909098"/><rect x="17" y="5" width="1" height="1" fill="#ffffff"/><rect x="18" y="5" width="1" height="1" fill="#101058"/><rect x="1" y="6" width="1" height="1" fill="#101058"/><rect x="2" y="6" width="1" height="1" fill="#ffffff"/><rect x="3" y="6" width="2" height="1" fill="#50e0f8"/><rect x="5" y="6" width="1" height="1" fill="#f8f000"/><rect x="6" y="6" width="4" height="1" fill="#c8c8f0"/><rect x="10" y="6" width="1" height="1" fill="#f8f000"/><rect x="11" y="6" width="4" height="1" fill="#c8c8f0"/><rect x="15" y="6" width="2" height="1" fill="#909098"/><rect x="17" y="6" width="1" height="1" fill="#ffffff"/><rect x="18" y="6" width="1" height="1" fill="#101058"/><rect x="1" y="7" width="1" height="1" fill="#101058"/><rect x="2" y="7" width="1" height="1" fill="#ffffff"/><rect x="3" y="7" width="1" height="1" fill="#50e0f8"/><rect x="4" y="7" width="2" height="1" fill="#f8f000"/><rect x="6" y="7" width="3" height="1" fill="#c8c8f0"/><rect x="9" y="7" width="2" height="1" fill="#f8f000"/><rect x="11" y="7" width="3" height="1" fill="#c8c8f0"/><rect x="14" y="7" width="1" height="1" fill="#f8f000"/><rect x="15" y="7" width="2" height="1" fill="#50e0f8"/><rect x="17" y="7" width="1" height="1" fill="#ffffff"/><rect x="18" y="7" width="1" height="1" fill="#101058"/><rect x="1" y="8" width="1" height="1" fill="#101058"/><rect x="2" y="8" width="1" height="1" fill="#ffffff"/><rect x="3" y="8" width="3" height="1" fill="#50e0f8"/><rect x="6" y="8" width="2" height="1" fill="#f8f000"/><rect x="8" y="8" width="2" height="1" fill="#c8c8f0"/><rect x="10" y="8" width="2" height="1" fill="#f8f000"/><rect x="12" y="8" width="1" height="1" fill="#c8c8f0"/><rect x="13" y="8" width="1" height="1" fill="#f8f000"/><rect x="14" y="8" width="3" height="1" fill="#50e0f8"/><rect x="17" y="8" width="1" height="1" fill="#ffffff"/><rect x="18" y="8" width="1" height="1" fill="#101058"/><rect x="1" y="9" width="1" height="1" fill="#101058"/><rect x="2" y="9" width="1" height="1" fill="#ffffff"/><rect x="3" y="9" width="3" height="1" fill="#50e0f8"/><rect x="6" y="9" width="6" height="1" fill="#101058"/><rect x="12" y="9" width="1" height="1" fill="#f8f000"/><rect x="13" y="9" width="4" height="1" fill="#50e0f8"/><rect x="17" y="9" width="1" height="1" fill="#ffffff"/><rect x="18" y="9" width="1" height="1" fill="#101058"/><rect x="1" y="10" width="1" height="1" fill="#101058"/><rect x="2" y="10" width="1" height="1" fill="#ffffff"/><rect x="3" y="10" width="2" height="1" fill="#50e0f8"/><rect x="5" y="10" width="2" height="1" fill="#f8f000"/><rect x="7" y="10" width="1" height="1" fill="#101058"/><rect x="8" y="10" width="4" height="1" fill="#ffffff"/><rect x="12" y="10" width="1" height="1" fill="#101058"/><rect x="13" y="10" width="4" height="1" fill="#50e0f8"/><rect x="17" y="10" width="1" height="1" fill="#ffffff"/><rect x="18" y="10" width="1" height="1" fill="#101058"/><rect x="1" y="11" width="1" height="1" fill="#101058"/><rect x="2" y="11" width="1" height="1" fill="#ffffff"/><rect x="3" y="11" width="1" height="1" fill="#50e0f8"/><rect x="4" y="11" width="1" height="1" fill="#f8f000"/><rect x="5" y="11" width="2" height="1" fill="#ffffff"/><rect x="7" y="11" width="1" height="1" fill="#f8f000"/><rect x="8" y="11" width="1" height="1" fill="#101058"/><rect x="9" y="11" width="4" height="1" fill="#ffffff"/><rect x="13" y="11" width="1" height="1" fill="#101058"/><rect x="14" y="11" width="3" height="1" fill="#50e0f8"/><rect x="17" y="11" width="1" height="1" fill="#ffffff"/><rect x="18" y="11" width="1" height="1" fill="#101058"/><rect x="1" y="12" width="1" height="1" fill="#101058"/><rect x="2" y="12" width="1" height="1" fill="#ffffff"/><rect x="3" y="12" width="1" height="1" fill="#f8f000"/><rect x="4" y="12" width="3" height="1" fill="#ffffff"/><rect x="7" y="12" width="2" height="1" fill="#f8f000"/><rect x="9" y="12" width="6" height="1" fill="#101058"/><rect x="15" y="12" width="2" height="1" fill="#50e0f8"/><rect x="17" y="12" width="1" height="1" fill="#ffffff"/><rect x="18" y="12" width="1" height="1" fill="#101058"/><rect x="1" y="13" width="2" height="1" fill="#101058"/><rect x="3" y="13" width="2" height="1" fill="#f8f000"/><rect x="5" y="13" width="2" height="1" fill="#ffffff"/><rect x="7" y="13" width="1" height="1" fill="#f8f000"/><rect x="8" y="13" width="1" height="1" fill="#101058"/><rect x="9" y="13" width="4" height="1" fill="#10a0a0"/><rect x="13" y="13" width="1" height="1" fill="#101058"/><rect x="14" y="13" width="3" height="1" fill="#50e0f8"/><rect x="17" y="13" width="1" height="1" fill="#ffffff"/><rect x="18" y="13" width="1" height="1" fill="#101058"/><rect x="1" y="14" width="1" height="1" fill="#101058"/><rect x="2" y="14" width="1" height="1" fill="#ffffff"/><rect x="3" y="14" width="1" height="1" fill="#50e0f8"/><rect x="4" y="14" width="1" height="1" fill="#f8f000"/><rect x="5" y="14" width="1" height="1" fill="#ffffff"/><rect x="6" y="14" width="1" height="1" fill="#f8f000"/><rect x="7" y="14" width="1" height="1" fill="#101058"/><rect x="8" y="14" width="4" height="1" fill="#10a0a0"/><rect x="12" y="14" width="1" height="1" fill="#101058"/><rect x="13" y="14" width="4" height="1" fill="#50e0f8"/><rect x="17" y="14" width="1" height="1" fill="#ffffff"/><rect x="18" y="14" width="1" height="1" fill="#101058"/><rect x="1" y="15" width="1" height="1" fill="#101058"/><rect x="2" y="15" width="1" height="1" fill="#ffffff"/><rect x="3" y="15" width="2" height="1" fill="#50e0f8"/><rect x="5" y="15" width="1" height="1" fill="#f8f000"/><rect x="6" y="15" width="1" height="1" fill="#101058"/><rect x="7" y="15" width="4" height="1" fill="#10a0a0"/><rect x="11" y="15" width="1" height="1" fill="#101058"/><rect x="12" y="15" width="5" height="1" fill="#50e0f8"/><rect x="17" y="15" width="1" height="1" fill="#ffffff"/><rect x="18" y="15" width="1" height="1" fill="#101058"/><rect x="1" y="16" width="1" height="1" fill="#101058"/><rect x="2" y="16" width="1" height="1" fill="#ffffff"/><rect x="3" y="16" width="2" height="1" fill="#50e0f8"/><rect x="5" y="16" width="6" height="1" fill="#101058"/><rect x="11" y="16" width="6" height="1" fill="#50e0f8"/><rect x="17" y="16" width="1" height="1" fill="#ffffff"/><rect x="18" y="16" width="1" height="1" fill="#101058"/><rect x="1" y="17" width="1" height="1" fill="#101058"/><rect x="2" y="17" width="16" height="1" fill="#ffffff"/><rect x="18" y="17" width="1" height="1" fill="#101058"/><rect x="1" y="18" width="18" height="1" fill="#101058"/></symbol>
<symbol id="i-props" viewBox="0 0 20 20" shape-rendering="crispEdges"><rect x="11" y="2" width="6" height="1" fill="#808080"/><rect x="18" y="2" width="2" height="1" fill="#101050"/><rect x="10" y="3" width="1" height="1" fill="url(#pC)"/><rect x="11" y="3" width="2" height="1" fill="url(#pP)"/><rect x="13" y="3" width="5" height="1" fill="#f8d0a8"/><rect x="18" y="3" width="2" height="1" fill="#101050"/><rect x="9" y="4" width="4" height="1" fill="url(#pP)"/><rect x="13" y="4" width="5" height="1" fill="#f8d0a8"/><rect x="18" y="4" width="2" height="1" fill="#101050"/><rect x="1" y="5" width="7" height="1" fill="#101050"/><rect x="8" y="5" width="6" height="1" fill="url(#pP)"/><rect x="14" y="5" width="4" height="1" fill="#f8d0a8"/><rect x="18" y="5" width="2" height="1" fill="#101050"/><rect x="1" y="6" width="1" height="1" fill="#101050"/><rect x="2" y="6" width="4" height="1" fill="#ffffff"/><rect x="6" y="6" width="8" height="1" fill="url(#pP)"/><rect x="14" y="6" width="4" height="1" fill="#f8d0a8"/><rect x="18" y="6" width="2" height="1" fill="#101050"/><rect x="1" y="7" width="1" height="1" fill="#101050"/><rect x="2" y="7" width="4" height="1" fill="#ffffff"/><rect x="6" y="7" width="1" height="1" fill="url(#pC)"/><rect x="7" y="7" width="2" height="1" fill="url(#pP)"/><rect x="9" y="7" width="1" height="1" fill="#ffffff"/><rect x="10" y="7" width="4" height="1" fill="url(#pP)"/><rect x="14" y="7" width="1" height="1" fill="#ffffff"/><rect x="15" y="7" width="1" height="1" fill="#101050"/><rect x="1" y="8" width="1" height="1" fill="#101050"/><rect x="2" y="8" width="9" height="1" fill="#ffffff"/><rect x="11" y="8" width="2" height="1" fill="url(#pP)"/><rect x="13" y="8" width="2" height="1" fill="#ffffff"/><rect x="15" y="8" width="1" height="1" fill="#101050"/><rect x="16" y="8" width="1" height="1" fill="#40f0f8"/><rect x="1" y="9" width="1" height="1" fill="#101050"/><rect x="2" y="9" width="13" height="1" fill="#ffffff"/><rect x="15" y="9" width="1" height="1" fill="#101050"/><rect x="16" y="9" width="1" height="1" fill="#40f0f8"/><rect x="1" y="10" width="1" height="1" fill="#101050"/><rect x="2" y="10" width="13" height="1" fill="#ffffff"/><rect x="15" y="10" width="1" height="1" fill="#101050"/><rect x="16" y="10" width="1" height="1" fill="#40f0f8"/><rect x="1" y="11" width="1" height="1" fill="#101050"/><rect x="2" y="11" width="1" height="1" fill="#ffffff"/><rect x="3" y="11" width="3" height="1" fill="#0010f0"/><rect x="6" y="11" width="1" height="1" fill="#ffffff"/><rect x="7" y="11" width="6" height="1" fill="#0010f0"/><rect x="13" y="11" width="2" height="1" fill="#ffffff"/><rect x="15" y="11" width="1" height="1" fill="#101050"/><rect x="16" y="11" width="1" height="1" fill="#40f0f8"/><rect x="1" y="12" width="1" height="1" fill="#101050"/><rect x="2" y="12" width="1" height="1" fill="#ffffff"/><rect x="3" y="12" width="3" height="1" fill="#40f0f8"/><rect x="6" y="12" width="1" height="1" fill="#ffffff"/><rect x="7" y="12" width="6" height="1" fill="#40f0f8"/><rect x="13" y="12" width="2" height="1" fill="#ffffff"/><rect x="15" y="12" width="1" height="1" fill="#101050"/><rect x="16" y="12" width="1" height="1" fill="#40f0f8"/><rect x="1" y="13" width="1" height="1" fill="#101050"/><rect x="2" y="13" width="13" height="1" fill="#ffffff"/><rect x="15" y="13" width="1" height="1" fill="#101050"/><rect x="16" y="13" width="1" height="1" fill="#40f0f8"/><rect x="1" y="14" width="1" height="1" fill="#101050"/><rect x="2" y="14" width="13" height="1" fill="#ffffff"/><rect x="15" y="14" width="1" height="1" fill="#101050"/><rect x="16" y="14" width="1" height="1" fill="#40f0f8"/><rect x="1" y="15" width="1" height="1" fill="#101050"/><rect x="2" y="15" width="1" height="1" fill="#ffffff"/><rect x="3" y="15" width="3" height="1" fill="#0010f0"/><rect x="6" y="15" width="1" height="1" fill="#ffffff"/><rect x="7" y="15" width="6" height="1" fill="#0010f0"/><rect x="13" y="15" width="2" height="1" fill="#ffffff"/><rect x="15" y="15" width="1" height="1" fill="#101050"/><rect x="16" y="15" width="1" height="1" fill="#40f0f8"/><rect x="1" y="16" width="1" height="1" fill="#101050"/><rect x="2" y="16" width="1" height="1" fill="#ffffff"/><rect x="3" y="16" width="3" height="1" fill="#40f0f8"/><rect x="6" y="16" width="1" height="1" fill="#ffffff"/><rect x="7" y="16" width="6" height="1" fill="#40f0f8"/><rect x="13" y="16" width="2" height="1" fill="#ffffff"/><rect x="15" y="16" width="1" height="1" fill="#101050"/><rect x="16" y="16" width="1" height="1" fill="#40f0f8"/><rect x="1" y="17" width="1" height="1" fill="#101050"/><rect x="2" y="17" width="13" height="1" fill="#ffffff"/><rect x="15" y="17" width="1" height="1" fill="#101050"/><rect x="16" y="17" width="1" height="1" fill="#40f0f8"/><rect x="1" y="18" width="15" height="1" fill="#101050"/><rect x="16" y="18" width="1" height="1" fill="#40f0f8"/></symbol>
<symbol id="i-subtree" viewBox="0 0 20 20" shape-rendering="crispEdges"><rect x="2" y="1" width="16" height="1" fill="#101010"/><rect x="2" y="2" width="1" height="1" fill="#101010"/><rect x="3" y="2" width="12" height="1" fill="#6060f0"/><rect x="15" y="2" width="1" height="1" fill="#101010"/><rect x="16" y="2" width="1" height="1" fill="#a8a8a0"/><rect x="17" y="2" width="1" height="1" fill="#101010"/><rect x="2" y="3" width="16" height="1" fill="#101010"/><rect x="2" y="4" width="1" height="1" fill="#101010"/><rect x="3" y="4" width="14" height="1" fill="#c4c4f8"/><rect x="17" y="4" width="1" height="1" fill="#101010"/><rect x="2" y="5" width="1" height="1" fill="#101010"/><rect x="3" y="5" width="1" height="1" fill="#c4c4f8"/><rect x="4" y="5" width="7" height="1" fill="#101010"/><rect x="11" y="5" width="6" height="1" fill="#c4c4f8"/><rect x="17" y="5" width="1" height="1" fill="#101010"/><rect x="2" y="6" width="1" height="1" fill="#101010"/><rect x="3" y="6" width="1" height="1" fill="#c4c4f8"/><rect x="4" y="6" width="1" height="1" fill="#101010"/><rect x="5" y="6" width="5" height="1" fill="#a8a8a0"/><rect x="10" y="6" width="1" height="1" fill="#101010"/><rect x="11" y="6" width="6" height="1" fill="#c4c4f8"/><rect x="17" y="6" width="1" height="1" fill="#101010"/><rect x="2" y="7" width="1" height="1" fill="#101010"/><rect x="3" y="7" width="1" height="1" fill="#c4c4f8"/><rect x="4" y="7" width="7" height="1" fill="#101010"/><rect x="11" y="7" width="6" height="1" fill="#c4c4f8"/><rect x="17" y="7" width="1" height="1" fill="#101010"/><rect x="2" y="8" width="1" height="1" fill="#101010"/><rect x="3" y="8" width="3" height="1" fill="#c4c4f8"/><rect x="6" y="8" width="1" height="1" fill="#505050"/><rect x="7" y="8" width="10" height="1" fill="#c4c4f8"/><rect x="17" y="8" width="1" height="1" fill="#101010"/><rect x="2" y="9" width="1" height="1" fill="#101010"/><rect x="3" y="9" width="3" height="1" fill="#c4c4f8"/><rect x="6" y="9" width="1" height="1" fill="#505050"/><rect x="7" y="9" width="2" height="1" fill="#c4c4f8"/><rect x="9" y="9" width="7" height="1" fill="#101010"/><rect x="16" y="9" width="1" height="1" fill="#c4c4f8"/><rect x="17" y="9" width="1" height="1" fill="#101010"/><rect x="2" y="10" width="1" height="1" fill="#101010"/><rect x="3" y="10" width="3" height="1" fill="#c4c4f8"/><rect x="6" y="10" width="3" height="1" fill="#505050"/><rect x="9" y="10" width="1" height="1" fill="#101010"/><rect x="10" y="10" width="5" height="1" fill="#a8a8a0"/><rect x="15" y="10" width="1" height="1" fill="#101010"/><rect x="16" y="10" width="1" height="1" fill="#c4c4f8"/><rect x="17" y="10" width="1" height="1" fill="#101010"/><rect x="2" y="11" width="1" height="1" fill="#101010"/><rect x="3" y="11" width="3" height="1" fill="#c4c4f8"/><rect x="6" y="11" width="1" height="1" fill="#505050"/><rect x="7" y="11" width="2" height="1" fill="#c4c4f8"/><rect x="9" y="11" width="7" height="1" fill="#101010"/><rect x="16" y="11" width="1" height="1" fill="#c4c4f8"/><rect x="17" y="11" width="1" height="1" fill="#101010"/><rect x="2" y="12" width="1" height="1" fill="#101010"/><rect x="3" y="12" width="3" height="1" fill="#dcdcff"/><rect x="6" y="12" width="1" height="1" fill="#505050"/><rect x="7" y="12" width="10" height="1" fill="#dcdcff"/><rect x="17" y="12" width="1" height="1" fill="#101010"/><rect x="2" y="13" width="1" height="1" fill="#101010"/><rect x="3" y="13" width="3" height="1" fill="#dcdcff"/><rect x="6" y="13" width="1" height="1" fill="#505050"/><rect x="7" y="13" width="10" height="1" fill="#dcdcff"/><rect x="17" y="13" width="1" height="1" fill="#101010"/><rect x="2" y="14" width="1" height="1" fill="#101010"/><rect x="3" y="14" width="3" height="1" fill="#dcdcff"/><rect x="6" y="14" width="1" height="1" fill="#505050"/><rect x="7" y="14" width="2" height="1" fill="#dcdcff"/><rect x="9" y="14" width="7" height="1" fill="#101010"/><rect x="16" y="14" width="1" height="1" fill="#dcdcff"/><rect x="17" y="14" width="1" height="1" fill="#101010"/><rect x="2" y="15" width="1" height="1" fill="#101010"/><rect x="3" y="15" width="3" height="1" fill="#dcdcff"/><rect x="6" y="15" width="3" height="1" fill="#505050"/><rect x="9" y="15" width="1" height="1" fill="#101010"/><rect x="10" y="15" width="5" height="1" fill="#a8a8a0"/><rect x="15" y="15" width="1" height="1" fill="#101010"/><rect x="16" y="15" width="1" height="1" fill="#dcdcff"/><rect x="17" y="15" width="1" height="1" fill="#101010"/><rect x="2" y="16" width="1" height="1" fill="#101010"/><rect x="3" y="16" width="3" height="1" fill="#dcdcff"/><rect x="6" y="16" width="1" height="1" fill="#505050"/><rect x="7" y="16" width="2" height="1" fill="#dcdcff"/><rect x="9" y="16" width="7" height="1" fill="#101010"/><rect x="16" y="16" width="1" height="1" fill="#dcdcff"/><rect x="17" y="16" width="1" height="1" fill="#101010"/><rect x="2" y="17" width="1" height="1" fill="#101010"/><rect x="3" y="17" width="3" height="1" fill="#f0f0ff"/><rect x="6" y="17" width="1" height="1" fill="#505050"/><rect x="7" y="17" width="10" height="1" fill="#f0f0ff"/><rect x="17" y="17" width="1" height="1" fill="#101010"/><rect x="2" y="18" width="16" height="1" fill="#101010"/></symbol>
<symbol id="i-pad" viewBox="0 0 22 22" shape-rendering="crispEdges"><rect x="6" y="1" width="15" height="1" fill="#1c1850"/><rect x="5" y="2" width="16" height="1" fill="#1c1850"/><rect x="4" y="3" width="17" height="1" fill="#1c1850"/><rect x="4" y="4" width="1" height="1" fill="#1c1850"/><rect x="5" y="4" width="12" height="1" fill="#ffffff"/><rect x="17" y="4" width="4" height="1" fill="#1c1850"/><rect x="4" y="5" width="1" height="1" fill="#1c1850"/><rect x="5" y="5" width="12" height="1" fill="#ffffff"/><rect x="17" y="5" width="4" height="1" fill="#1c1850"/><rect x="4" y="6" width="1" height="1" fill="#1c1850"/><rect x="5" y="6" width="1" height="1" fill="#ffffff"/><rect x="6" y="6" width="7" height="1" fill="#1c1850"/><rect x="13" y="6" width="4" height="1" fill="#ffffff"/><rect x="17" y="6" width="4" height="1" fill="#1c1850"/><rect x="4" y="7" width="1" height="1" fill="#1c1850"/><rect x="5" y="7" width="1" height="1" fill="#ffffff"/><rect x="6" y="7" width="1" height="1" fill="#1c1850"/><rect x="7" y="7" width="4" height="1" fill="#f8f090"/><rect x="11" y="7" width="2" height="1" fill="#1c1850"/><rect x="13" y="7" width="4" height="1" fill="#ffffff"/><rect x="17" y="7" width="4" height="1" fill="#1c1850"/><rect x="4" y="8" width="1" height="1" fill="#1c1850"/><rect x="5" y="8" width="5" height="1" fill="#f8f090"/><rect x="10" y="8" width="3" height="1" fill="#1c1850"/><rect x="13" y="8" width="4" height="1" fill="#ffffff"/><rect x="17" y="8" width="4" height="1" fill="#1c1850"/><rect x="3" y="9" width="1" height="1" fill="#1c1850"/><rect x="4" y="9" width="5" height="1" fill="#f8f090"/><rect x="9" y="9" width="4" height="1" fill="#1c1850"/><rect x="13" y="9" width="4" height="1" fill="#ffffff"/><rect x="17" y="9" width="4" height="1" fill="#1c1850"/><rect x="2" y="10" width="1" height="1" fill="#1c1850"/><rect x="3" y="10" width="5" height="1" fill="#f8f090"/><rect x="8" y="10" width="5" height="1" fill="#1c1850"/><rect x="13" y="10" width="4" height="1" fill="#ffffff"/><rect x="17" y="10" width="4" height="1" fill="#1c1850"/><rect x="1" y="11" width="12" height="1" fill="#1c1850"/><rect x="13" y="11" width="4" height="1" fill="#ffffff"/><rect x="17" y="11" width="4" height="1" fill="#1c1850"/><rect x="1" y="12" width="1" height="1" fill="#1c1850"/><rect x="2" y="12" width="5" height="1" fill="#f8f090"/><rect x="7" y="12" width="5" height="1" fill="#1c1850"/><rect x="12" y="12" width="5" height="1" fill="#ffffff"/><rect x="17" y="12" width="4" height="1" fill="#1c1850"/><rect x="1" y="13" width="1" height="1" fill="#1c1850"/><rect x="2" y="13" width="5" height="1" fill="#f8f090"/><rect x="7" y="13" width="4" height="1" fill="#1c1850"/><rect x="11" y="13" width="6" height="1" fill="#ffffff"/><rect x="17" y="13" width="4" height="1" fill="#1c1850"/><rect x="1" y="14" width="1" height="1" fill="#1c1850"/><rect x="2" y="14" width="5" height="1" fill="#f8f090"/><rect x="7" y="14" width="3" height="1" fill="#1c1850"/><rect x="10" y="14" width="7" height="1" fill="#ffffff"/><rect x="17" y="14" width="4" height="1" fill="#1c1850"/><rect x="1" y="15" width="1" height="1" fill="#1c1850"/><rect x="2" y="15" width="5" height="1" fill="#f8f090"/><rect x="7" y="15" width="2" height="1" fill="#1c1850"/><rect x="9" y="15" width="8" height="1" fill="#ffffff"/><rect x="17" y="15" width="4" height="1" fill="#1c1850"/><rect x="1" y="16" width="1" height="1" fill="#1c1850"/><rect x="2" y="16" width="5" height="1" fill="#f8f090"/><rect x="7" y="16" width="1" height="1" fill="#1c1850"/><rect x="8" y="16" width="9" height="1" fill="#ffffff"/><rect x="17" y="16" width="4" height="1" fill="#1c1850"/><rect x="1" y="17" width="7" height="1" fill="#1c1850"/><rect x="8" y="17" width="9" height="1" fill="#ffffff"/><rect x="17" y="17" width="3" height="1" fill="#1c1850"/><rect x="4" y="18" width="1" height="1" fill="#1c1850"/><rect x="5" y="18" width="12" height="1" fill="#ffffff"/><rect x="17" y="18" width="2" height="1" fill="#1c1850"/><rect x="4" y="19" width="1" height="1" fill="#1c1850"/><rect x="5" y="19" width="12" height="1" fill="#ffffff"/><rect x="17" y="19" width="1" height="1" fill="#1c1850"/><rect x="4" y="20" width="14" height="1" fill="#1c1850"/></symbol>
<symbol id="i-pocket" viewBox="0 0 22 22" shape-rendering="crispEdges"><rect x="4" y="2" width="17" height="1" fill="#1c1850"/><rect x="3" y="3" width="1" height="1" fill="#1c1850"/><rect x="4" y="3" width="15" height="1" fill="#606050"/><rect x="19" y="3" width="2" height="1" fill="#1c1850"/><rect x="2" y="4" width="1" height="1" fill="#1c1850"/><rect x="3" y="4" width="15" height="1" fill="#606050"/><rect x="18" y="4" width="1" height="1" fill="#1c1850"/><rect x="19" y="4" width="1" height="1" fill="#606050"/><rect x="20" y="4" width="1" height="1" fill="#1c1850"/><rect x="1" y="5" width="17" height="1" fill="#1c1850"/><rect x="18" y="5" width="2" height="1" fill="#606050"/><rect x="20" y="5" width="1" height="1" fill="#1c1850"/><rect x="1" y="6" width="1" height="1" fill="#1c1850"/><rect x="2" y="6" width="15" height="1" fill="#f8f090"/><rect x="17" y="6" width="1" height="1" fill="#1c1850"/><rect x="18" y="6" width="2" height="1" fill="#606050"/><rect x="20" y="6" width="1" height="1" fill="#1c1850"/><rect x="1" y="7" width="1" height="1" fill="#1c1850"/><rect x="2" y="7" width="15" height="1" fill="#f8f090"/><rect x="17" y="7" width="1" height="1" fill="#1c1850"/><rect x="18" y="7" width="2" height="1" fill="#606050"/><rect x="20" y="7" width="1" height="1" fill="#1c1850"/><rect x="1" y="8" width="1" height="1" fill="#1c1850"/><rect x="2" y="8" width="15" height="1" fill="#f8f090"/><rect x="17" y="8" width="1" height="1" fill="#1c1850"/><rect x="18" y="8" width="2" height="1" fill="#606050"/><rect x="20" y="8" width="1" height="1" fill="#1c1850"/><rect x="1" y="9" width="1" height="1" fill="#1c1850"/><rect x="2" y="9" width="2" height="1" fill="#f8f090"/><rect x="4" y="9" width="7" height="1" fill="#1c1850"/><rect x="11" y="9" width="6" height="1" fill="#f8f090"/><rect x="17" y="9" width="1" height="1" fill="#1c1850"/><rect x="18" y="9" width="2" height="1" fill="#606050"/><rect x="20" y="9" width="1" height="1" fill="#1c1850"/><rect x="1" y="10" width="1" height="1" fill="#1c1850"/><rect x="2" y="10" width="2" height="1" fill="#f8f090"/><rect x="4" y="10" width="1" height="1" fill="#1c1850"/><rect x="5" y="10" width="1" height="1" fill="#606050"/><rect x="6" y="10" width="1" height="1" fill="#1c1850"/><rect x="7" y="10" width="3" height="1" fill="#40406e"/><rect x="10" y="10" width="1" height="1" fill="#1c1850"/><rect x="11" y="10" width="6" height="1" fill="#f8f090"/><rect x="17" y="10" width="1" height="1" fill="#1c1850"/><rect x="18" y="10" width="2" height="1" fill="#606050"/><rect x="20" y="10" width="1" height="1" fill="#1c1850"/><rect x="1" y="11" width="1" height="1" fill="#1c1850"/><rect x="2" y="11" width="2" height="1" fill="#f8f090"/><rect x="4" y="11" width="1" height="1" fill="#1c1850"/><rect x="5" y="11" width="1" height="1" fill="#606050"/><rect x="6" y="11" width="1" height="1" fill="#1c1850"/><rect x="7" y="11" width="3" height="1" fill="#40406e"/><rect x="10" y="11" width="1" height="1" fill="#1c1850"/><rect x="11" y="11" width="6" height="1" fill="#f8f090"/><rect x="17" y="11" width="1" height="1" fill="#1c1850"/><rect x="18" y="11" width="2" height="1" fill="#606050"/><rect x="20" y="11" width="1" height="1" fill="#1c1850"/><rect x="1" y="12" width="1" height="1" fill="#1c1850"/><rect x="2" y="12" width="2" height="1" fill="#f8f090"/><rect x="4" y="12" width="1" height="1" fill="#1c1850"/><rect x="5" y="12" width="1" height="1" fill="#606050"/><rect x="6" y="12" width="1" height="1" fill="#1c1850"/><rect x="7" y="12" width="3" height="1" fill="#40406e"/><rect x="10" y="12" width="5" height="1" fill="#1c1850"/><rect x="15" y="12" width="2" height="1" fill="#f8f090"/><rect x="17" y="12" width="1" height="1" fill="#1c1850"/><rect x="18" y="12" width="2" height="1" fill="#606050"/><rect x="20" y="12" width="1" height="1" fill="#1c1850"/><rect x="1" y="13" width="1" height="1" fill="#1c1850"/><rect x="2" y="13" width="2" height="1" fill="#f8f090"/><rect x="4" y="13" width="1" height="1" fill="#1c1850"/><rect x="5" y="13" width="1" height="1" fill="#606050"/><rect x="6" y="13" width="1" height="1" fill="#1c1850"/><rect x="7" y="13" width="7" height="1" fill="#40406e"/><rect x="14" y="13" width="1" height="1" fill="#1c1850"/><rect x="15" y="13" width="2" height="1" fill="#f8f090"/><rect x="17" y="13" width="1" height="1" fill="#1c1850"/><rect x="18" y="13" width="2" height="1" fill="#606050"/><rect x="20" y="13" width="1" height="1" fill="#1c1850"/><rect x="1" y="14" width="1" height="1" fill="#1c1850"/><rect x="2" y="14" width="2" height="1" fill="#f8f090"/><rect x="4" y="14" width="1" height="1" fill="#1c1850"/><rect x="5" y="14" width="1" height="1" fill="#606050"/><rect x="6" y="14" width="1" height="1" fill="#1c1850"/><rect x="7" y="14" width="7" height="1" fill="#40406e"/><rect x="14" y="14" width="1" height="1" fill="#1c1850"/><rect x="15" y="14" width="2" height="1" fill="#f8f090"/><rect x="17" y="14" width="1" height="1" fill="#1c1850"/><rect x="18" y="14" width="2" height="1" fill="#606050"/><rect x="20" y="14" width="1" height="1" fill="#1c1850"/><rect x="1" y="15" width="1" height="1" fill="#1c1850"/><rect x="2" y="15" width="2" height="1" fill="#f8f090"/><rect x="4" y="15" width="1" height="1" fill="#1c1850"/><rect x="5" y="15" width="1" height="1" fill="#606050"/><rect x="6" y="15" width="1" height="1" fill="#1c1850"/><rect x="7" y="15" width="7" height="1" fill="#40406e"/><rect x="14" y="15" width="1" height="1" fill="#1c1850"/><rect x="15" y="15" width="2" height="1" fill="#f8f090"/><rect x="17" y="15" width="1" height="1" fill="#1c1850"/><rect x="18" y="15" width="2" height="1" fill="#606050"/><rect x="20" y="15" width="1" height="1" fill="#1c1850"/><rect x="1" y="16" width="1" height="1" fill="#1c1850"/><rect x="2" y="16" width="2" height="1" fill="#f8f090"/><rect x="4" y="16" width="1" height="1" fill="#1c1850"/><rect x="5" y="16" width="1" height="1" fill="#606050"/><rect x="6" y="16" width="9" height="1" fill="#1c1850"/><rect x="15" y="16" width="2" height="1" fill="#f8f090"/><rect x="17" y="16" width="1" height="1" fill="#1c1850"/><rect x="18" y="16" width="2" height="1" fill="#606050"/><rect x="20" y="16" width="1" height="1" fill="#1c1850"/><rect x="1" y="17" width="1" height="1" fill="#1c1850"/><rect x="2" y="17" width="2" height="1" fill="#f8f090"/><rect x="4" y="17" width="1" height="1" fill="#1c1850"/><rect x="5" y="17" width="9" height="1" fill="#606050"/><rect x="14" y="17" width="1" height="1" fill="#1c1850"/><rect x="15" y="17" width="2" height="1" fill="#f8f090"/><rect x="17" y="17" width="1" height="1" fill="#1c1850"/><rect x="18" y="17" width="2" height="1" fill="#606050"/><rect x="20" y="17" width="1" height="1" fill="#1c1850"/><rect x="1" y="18" width="1" height="1" fill="#1c1850"/><rect x="2" y="18" width="2" height="1" fill="#f8f090"/><rect x="4" y="18" width="11" height="1" fill="#1c1850"/><rect x="15" y="18" width="2" height="1" fill="#f8f090"/><rect x="17" y="18" width="1" height="1" fill="#1c1850"/><rect x="18" y="18" width="2" height="1" fill="#606050"/><rect x="20" y="18" width="1" height="1" fill="#1c1850"/><rect x="1" y="19" width="1" height="1" fill="#1c1850"/><rect x="2" y="19" width="15" height="1" fill="#f8f090"/><rect x="17" y="19" width="1" height="1" fill="#1c1850"/><rect x="18" y="19" width="2" height="1" fill="#606050"/><rect x="20" y="19" width="1" height="1" fill="#1c1850"/><rect x="1" y="20" width="1" height="1" fill="#1c1850"/><rect x="2" y="20" width="15" height="1" fill="#f8f090"/><rect x="17" y="20" width="1" height="1" fill="#1c1850"/><rect x="18" y="20" width="1" height="1" fill="#606050"/><rect x="19" y="20" width="2" height="1" fill="#1c1850"/><rect x="1" y="21" width="17" height="1" fill="#1c1850"/></symbol>
<!--/PIX-->
<pattern id="chk" width="2" height="2" patternUnits="userSpaceOnUse"><rect width="2" height="2" fill="#24245a"/><rect x="0" y="0" width="1" height="1" fill="#d0d0d8"/><rect x="1" y="1" width="1" height="1" fill="#d0d0d8"/></pattern>
<pattern id="chkw" width="2" height="2" patternUnits="userSpaceOnUse"><rect width="2" height="2" fill="#20205a"/><rect x="0" y="0" width="1" height="1" fill="#ffffff"/><rect x="1" y="1" width="1" height="1" fill="#ffffff"/></pattern>
<pattern id="chky" width="2" height="2" patternUnits="userSpaceOnUse"><rect width="2" height="2" fill="#20205a"/><rect x="0" y="0" width="1" height="1" fill="#f4e070"/><rect x="1" y="1" width="1" height="1" fill="#f4e070"/></pattern>
<pattern id="chko" width="2" height="2" patternUnits="userSpaceOnUse"><rect width="2" height="2" fill="#20205a"/><rect x="0" y="0" width="1" height="1" fill="#ff7010"/><rect x="1" y="1" width="1" height="1" fill="#ff7010"/></pattern>



<symbol id="i-quader" viewBox="0 0 26 22">
 <polygon points="9.5,1.5 20,1.5 23.5,5 23.5,17.5 9.5,17.5" fill="#ffffff" stroke="#20c0d0" stroke-width="1"/>
 <polygon points="19.5,1.5 23.5,5.5 19.5,5.5" fill="#40e0f0"/>
 <line x1="19" y1="5.5" x2="23" y2="5.5" stroke="#101050" stroke-width="1"/>
 <g fill="#101050"><rect x="9" y="7" width="6" height="14"/><rect x="15" y="9" width="3" height="10"/></g>
 <g fill="#888880"><rect x="10" y="7" width="4" height="1.5"/><rect x="13" y="9.5" width="3" height="1.5"/><rect x="14" y="12.5" width="4" height="1.8"/><rect x="13" y="16" width="4" height="1.5"/><rect x="11" y="19" width="3" height="1.2"/></g>
 <g transform="translate(8.3,15)">
  <g fill="#f8f088">
   <rect x="-1.3" y="-6.8" width="2.6" height="13.6"/>
   <rect x="-6.8" y="-1.3" width="13.6" height="2.6"/>
   <rect x="-1.3" y="-6.8" width="2.6" height="13.6" transform="rotate(45)"/>
   <rect x="-1.3" y="-6.8" width="2.6" height="13.6" transform="rotate(-45)"/>
  </g>
  <circle r="4.5" fill="#f8f088"/>
  <circle r="2.8" fill="#101050"/>
  <path d="M-0.8,-1.8 Q1,0 -0.8,1.8" stroke="#f0f000" stroke-width="1" fill="none"/>
 </g>
</symbol>

<symbol id="i-axis" viewBox="0 0 22 22">
 <g fill="#1c1850">
  <polygon points="9,2 11,1.5 13,3.5 10,4.5"/>
  <polygon points="19,11 22,13 19,15"/>
  <polygon points="3,18 6,20.5 3.5,21"/>
  <rect x="10" y="4" width="1" height="10"/>
  <rect x="10" y="13" width="9" height="1"/>
 </g>
 <g stroke="#f8e888" fill="none">
  <line x1="9.5" y1="4" x2="9.5" y2="13" stroke-width="1.1"/>
  <line x1="11" y1="12.5" x2="18.5" y2="12.5" stroke-width="1.1"/>
  <line x1="9" y1="13.5" x2="4" y2="18.5" stroke-width="1.2"/>
  <line x1="7" y1="3.5" x2="10" y2="1" stroke-width="1" stroke-dasharray="1,0.5"/>
  <line x1="18.5" y1="11" x2="18.5" y2="13" stroke-width="1"/>
  <line x1="18.5" y1="14" x2="18.5" y2="16" stroke-width="1"/>
  <line x1="2.5" y1="18" x2="2.5" y2="21" stroke-width="1"/>
 </g>
</symbol>





<symbol id="i-chamfer" viewBox="0 0 22 22">
 <polygon points="0.5,9.5 7.8,2 8.5,1.5 21,5.8 21,18 10,22 7.5,21.8 0.5,15.5" fill="#000010"/>
 <polygon points="7.8,2.2 20,6.2 20,7 16,7.6 7.8,3" fill="#a8a8a8"/>
 <polygon points="1.3,10 7.8,16 7.8,20.5 1.3,15" fill="#a8a8a8"/>
 <polygon points="16,7.5 20.2,6.5 20.2,7.8 9.2,17.3 9.2,21 8.1,21 8.1,15.8" fill="#f8f090"/>
 <polygon points="10.3,17.6 20.2,8.8 20.2,17.3 10.3,21" fill="#58a8d8"/>
 <polygon points="1.4,9.5 7.8,3.2 15.7,7.5 7.8,15.3" fill="#f8e080" stroke="#ffffff" stroke-width="1.4"/>
 <polygon points="1.1,9.5 7.8,2.8 16.1,7.5 7.8,15.8" fill="none" stroke="#c00010" stroke-width="0.9" stroke-dasharray="1.2,0.8"/>
</symbol>

<symbol id="i-block" viewBox="0 0 22 22">
 <polygon points="1,8.5 8,1 22,1 22,15 15,22 1,22" fill="#000010"/>
 <polygon points="2.5,8 8.5,2 21,2 15,8" fill="#f8c8a8"/>
 <g stroke="#000010" stroke-width="1" fill="none"><line x1="9" y1="3.5" x2="18" y2="3.5"/><line x1="8" y1="4.5" x2="9" y2="4.5"/><line x1="7" y1="5.5" x2="8" y2="5.5"/><line x1="6" y1="6.5" x2="15" y2="6.5"/></g>
 <rect x="2" y="9" width="13" height="13" fill="#f8f090"/>
 <path d="M4,10 H11 L12.5,11.5 V14 L12,15 L12.5,16 V18.5 L11,20 H4 Z" fill="#000010"/>
 <rect x="5" y="12" width="6" height="2" fill="#f8f090"/>
 <rect x="5" y="16" width="6" height="2" fill="#f8f090"/>
 <rect x="5" y="12" width="1" height="2" fill="#a0a090"/>
 <rect x="5" y="16" width="1" height="2" fill="#a0a090"/>
 <polygon points="15.5,8.5 21,3 21,14.5 15.5,20.5" fill="#10b0b8"/>
 <polyline points="16.5,17 17.5,8.5 19,8 19.5,13" stroke="#202020" stroke-width="1" fill="none"/>
 <line x1="17" y1="12.5" x2="19.5" y2="12" stroke="#202020" stroke-width="0.8"/>
</symbol>




<symbol id="i-cut" viewBox="0 0 20 20">
 <line x1="2" y1="1.5" x2="8.8" y2="13.5" stroke="#909090" stroke-width="1" stroke-dasharray="1,1"/>
 <line x1="3" y1="1.5" x2="9.5" y2="13" stroke="#ffffff" stroke-width="1.1"/>
 <line x1="4" y1="1.2" x2="10.2" y2="12.5" stroke="#000" stroke-width="1.2"/>
 <line x1="14.5" y1="1.5" x2="8.5" y2="13" stroke="#909090" stroke-width="1" stroke-dasharray="1,1"/>
 <line x1="15.3" y1="1.5" x2="9.3" y2="13.5" stroke="#ffffff" stroke-width="1.1"/>
 <line x1="16.3" y1="1.8" x2="10" y2="14" stroke="#000" stroke-width="1.2"/>
 <circle cx="4.6" cy="16.5" r="3" fill="#1468ff"/>
 <circle cx="12.8" cy="16.5" r="3" fill="#1468ff"/>
 <path d="M2.3,15.5 Q3,13.8 5,13.6" stroke="#60e8ff" stroke-width="1" fill="none"/>
 <path d="M10.5,15.5 Q11.2,13.8 13.2,13.6" stroke="#60e8ff" stroke-width="1" fill="none"/>
 <rect x="3.5" y="15.3" width="2.4" height="2.4" fill="#000080"/><rect x="4.2" y="16" width="1" height="1" fill="#fff"/>
 <rect x="11.7" y="15.3" width="2.4" height="2.4" fill="#000080"/><rect x="12.4" y="16" width="1" height="1" fill="#fff"/>
 <line x1="8.5" y1="14.5" x2="8.5" y2="19" stroke="#000" stroke-width="0.9"/>
 <line x1="16.3" y1="15" x2="16.3" y2="18.5" stroke="#000" stroke-width="0.9"/>
</symbol>

<symbol id="i-copy" viewBox="0 0 22 22">
 <polygon points="1.5,1.5 10.5,1.5 13.5,4.5 13.5,16.5 1.5,16.5" fill="#ffffff" stroke="#808080" stroke-width="1"/>
 <line x1="1" y1="17.5" x2="8" y2="17.5" stroke="#000" stroke-width="1"/>
 <polyline points="10.5,1.5 13.5,4.5" stroke="#000" stroke-width="1.2" fill="none"/>
 <g stroke="#103090" stroke-width="1"><line x1="4" y1="6.5" x2="8" y2="6.5"/><line x1="4" y1="8.5" x2="8" y2="8.5"/><line x1="4" y1="10.5" x2="8" y2="10.5"/><line x1="4" y1="12.5" x2="8" y2="12.5"/><line x1="4" y1="14.5" x2="8" y2="14.5"/></g>
 <polygon points="7.5,5.5 16.5,5.5 20.5,9.5 20.5,21.5 7.5,21.5" fill="#ffffff" stroke="#808080" stroke-width="1"/>
 <polyline points="16.5,5.5 20.5,9.5 20.5,21.5 7.5,21.5" stroke="#000" stroke-width="1" fill="none"/>
 <g fill="#f0f080"><rect x="9" y="9" width="1" height="1"/><rect x="9" y="15" width="1" height="1"/><rect x="9" y="19" width="1" height="1"/><rect x="19" y="13" width="1" height="1"/><rect x="19" y="17" width="1" height="1"/></g>
 <g stroke-width="1"><line x1="10" y1="10.5" x2="14" y2="10.5" stroke="#3070f0"/><line x1="10" y1="12.5" x2="18" y2="12.5" stroke="#3070f0"/><line x1="10" y1="14.5" x2="18" y2="14.5" stroke="#0010f0"/><line x1="10" y1="16.5" x2="18" y2="16.5" stroke="#0010f0"/><line x1="10" y1="18.5" x2="18" y2="18.5" stroke="#0010f0"/></g>
</symbol>

<symbol id="i-paste" viewBox="0 0 22 22">
 <defs><linearGradient id="clipg" x1="0" y1="0" x2="1" y2="1"><stop offset="0" stop-color="#fffff0"/><stop offset="0.35" stop-color="#c8c890"/><stop offset="0.6" stop-color="#a0a060"/><stop offset="1" stop-color="#707030"/></linearGradient></defs>
 <rect x="1" y="4" width="15" height="13" fill="url(#clipg)"/>
 <polyline points="16.5,4 16.5,17.5 2,17.5" stroke="#000" stroke-width="1" fill="none"/>
 <polygon points="4,7 6,3 11,3 13,7" fill="#e8a820"/>
 <rect x="7" y="4.5" width="3" height="1.5" fill="#708030"/>
 <line x1="4" y1="7.5" x2="13.5" y2="7.5" stroke="#000" stroke-width="1"/>
 <polygon points="9.5,11.5 16.5,11.5 19.5,14.5 19.5,20.5 9.5,20.5" fill="#ffffff" stroke="#808080" stroke-width="1"/>
 <polyline points="16.5,11.5 19.5,14.5 19.5,20.5 9.5,20.5" stroke="#000" stroke-width="1" fill="none"/>
 <g stroke="#0010f0" stroke-width="1"><line x1="11" y1="14.5" x2="14" y2="14.5"/><line x1="11" y1="16.5" x2="18" y2="16.5"/><line x1="11" y1="18.5" x2="18" y2="18.5"/></g>
</symbol>

<symbol id="i-update" viewBox="0 0 22 22">
 <circle cx="11" cy="11" r="10.3" fill="#1c1050"/>
 <path d="M3,19 A10.3,10.3 0 0 1 1.5,14" fill="none" stroke="#20c8d0" stroke-width="1"/>
 <path d="M14,1.3 A10.3,10.3 0 0 1 20.5,7" fill="none" stroke="#20c8d0" stroke-width="1"/>
 <path d="M2.8,7.8 C4.5,3.5 9,3 13,3.6 C17.5,4.5 18.5,8.5 17.5,11 C16.5,13 14.5,12.8 13.5,11.5" fill="none" stroke="#f8f890" stroke-width="2.5"/>
 <path d="M11.5,11.5 C10,8.8 5.5,9 5,12.5 C5,16.5 8.5,18.5 12.5,18.3 C15.5,18.2 17.5,17 19.5,15" fill="none" stroke="#f8f890" stroke-width="2.5"/>
 <path d="M3.5,7 C5,4 9,3.2 13,3.2" fill="none" stroke="#20c8d0" stroke-width="0.6" opacity="0.8"/>
</symbol>
</defs>
</svg>

<div id="tree">
<div class="tls" style="left:7px;top:41px;width:4px;height:179px"></div>
<div class="tls" style="left:9px;top:59px;width:12px;height:4px"></div>
<div class="tls" style="left:9px;top:85px;width:12px;height:4px"></div>
<div class="tls" style="left:9px;top:112px;width:12px;height:4px"></div>
<div class="tls" style="left:14px;top:138px;width:7px;height:4px"></div>
<div class="tls" style="left:14px;top:164px;width:7px;height:4px"></div>
<div class="tls" style="left:14px;top:216px;width:7px;height:4px"></div>
<div class="tls" style="left:26px;top:174px;width:4px;height:20px"></div>
<div class="tls" style="left:33px;top:190px;width:8px;height:4px"></div>
<div class="tls" style="left:26px;top:225px;width:4px;height:125px"></div>
<div class="tls" style="left:33px;top:242px;width:8px;height:4px"></div>
<div class="tls" style="left:33px;top:294px;width:8px;height:4px"></div>
<div class="tls" style="left:33px;top:346px;width:8px;height:4px"></div>
<div class="tls" style="left:45px;top:251px;width:4px;height:21px"></div>
<div class="tls" style="left:52px;top:268px;width:8px;height:4px"></div>
<div class="tls" style="left:45px;top:304px;width:4px;height:20px"></div>
<div class="tls" style="left:52px;top:320px;width:8px;height:4px"></div>
<div class="tls" style="left:45px;top:356px;width:4px;height:46px"></div>
<div class="tls" style="left:47px;top:372px;width:13px;height:4px"></div>
<div class="tls" style="left:47px;top:398px;width:13px;height:4px"></div>
<div class="tl" style="left:8px;top:42px;width:2px;height:177px"></div>
<div class="tl" style="left:10px;top:60px;width:10px;height:2px"></div>
<div class="tl" style="left:10px;top:86px;width:10px;height:2px"></div>
<div class="tl" style="left:10px;top:113px;width:10px;height:2px"></div>
<div class="tl" style="left:15px;top:139px;width:5px;height:2px"></div>
<div class="tl" style="left:15px;top:165px;width:5px;height:2px"></div>
<div class="tl" style="left:15px;top:217px;width:5px;height:2px"></div>
<div class="tl" style="left:27px;top:175px;width:2px;height:18px"></div>
<div class="tl" style="left:34px;top:191px;width:6px;height:2px"></div>
<div class="tl" style="left:27px;top:226px;width:2px;height:123px"></div>
<div class="tl" style="left:34px;top:243px;width:6px;height:2px"></div>
<div class="tl" style="left:34px;top:295px;width:6px;height:2px"></div>
<div class="tl" style="left:34px;top:347px;width:6px;height:2px"></div>
<div class="tl" style="left:46px;top:252px;width:2px;height:19px"></div>
<div class="tl" style="left:53px;top:269px;width:6px;height:2px"></div>
<div class="tl" style="left:46px;top:305px;width:2px;height:18px"></div>
<div class="tl" style="left:53px;top:321px;width:6px;height:2px"></div>
<div class="tl" style="left:46px;top:357px;width:2px;height:44px"></div>
<div class="tl" style="left:48px;top:373px;width:11px;height:2px"></div>
<div class="tl" style="left:48px;top:399px;width:11px;height:2px"></div>
<div class="node plus" style="left:4px;top:135px"></div>
<div class="node" style="left:4px;top:161px"></div>
<div class="node" style="left:4px;top:213px"></div>
<div class="node plus" style="left:23px;top:187px"></div>
<div class="node" style="left:23px;top:239px"></div>
<div class="node" style="left:23px;top:291px"></div>
<div class="node" style="left:23px;top:343px"></div>
<div class="node plus" style="left:42px;top:265px"></div>
<div class="node plus" style="left:42px;top:317px"></div>
<svg class="abs" style="left:0px;top:22px" width="26" height="22"><use href="#i-quader"/></svg>
<svg class="abs" style="left:21px;top:49px" width="22" height="22"><use href="#i-plane"/></svg>
<svg class="abs" style="left:21px;top:75px" width="22" height="22"><use href="#i-plane"/></svg>
<svg class="abs" style="left:21px;top:102px" width="22" height="22"><use href="#i-plane"/></svg>
<svg class="abs" style="left:20px;top:128px" width="22" height="22"><use href="#i-axis"/></svg>
<svg class="abs" style="left:21px;top:154px" width="22" height="22"><use href="#i-geo"/></svg>
<svg class="abs" style="left:40px;top:180px" width="22" height="22"><use href="#i-sketch"/></svg>
<svg class="abs" style="left:21px;top:206px" width="22" height="22"><use href="#i-pb"/></svg>
<svg class="abs" style="left:40px;top:232px" width="22" height="22"><use href="#i-pad"/></svg>
<svg class="abs" style="left:59px;top:258px" width="22" height="22"><use href="#i-sketch"/></svg>
<svg class="abs" style="left:40px;top:284px" width="22" height="22"><use href="#i-pocket"/></svg>
<svg class="abs" style="left:59px;top:310px" width="22" height="22"><use href="#i-sketch"/></svg>
<svg class="abs" style="left:40px;top:336px" width="22" height="22"><use href="#i-chamfer"/></svg>
<svg class="abs" style="left:58px;top:363px" width="22" height="22"><use href="#i-block"/></svg>
<svg class="abs" style="left:58px;top:389px" width="22" height="22"><use href="#i-block"/></svg>
<div class="lbl" style="left:26px;top:27px;width:48px"><span class="tx">Quader</span></div>
<div class="lbl" style="left:45px;top:53px;width:54px"><span class="tx"><span class="pl">xy plane</span></span></div>
<div class="lbl" style="left:45px;top:79px;width:54px"><span class="tx"><span class="pl">yz plane</span></span></div>
<div class="lbl" style="left:45px;top:106px;width:54px"><span class="tx"><span class="pl">zx plane</span></span></div>
<div class="lbl" style="left:45px;top:132px;width:82px"><span class="tx">Axis Systems</span></div>
<div class="lbl" style="left:45px;top:158px;width:109px"><span class="tx">Geometrical Set. 1</span></div>
<div class="lbl" style="left:63px;top:184px;width:55px"><span class="tx">Sketch. 1</span></div>
<div class="lbl" style="left:45px;top:210px;width:59px"><span class="tx">PartBody</span></div>
<div class="lbl" style="left:63px;top:236px;width:36px"><span class="tx">Pad. 1</span></div>
<div class="lbl" style="left:82px;top:262px;width:55px"><span class="tx">Sketch. 1</span></div>
<div class="lbl" style="left:63px;top:288px;width:55px"><span class="tx">Pocket. 1</span></div>
<div class="lbl" style="left:82px;top:314px;width:55px"><span class="tx">Sketch. 2</span></div>
<div class="lbl sel" style="left:63px;top:340px;width:66px"><span class="tx">Chamfer. 1</span></div>
<div class="abs" style="left:64px;top:356px;width:64px;height:1.5px;background:#fff"></div>
<div class="lbl" style="left:82px;top:366px;width:90px"><span class="tx">UserSurface.1</span></div>
<div class="lbl" style="left:82px;top:392px;width:60px"><span class="tx">Arete.1</span></div>

</div>

<!-- MODEL -->
<svg class="abs" style="left:0;top:0" width="998" height="776" viewBox="0 0 998 776">
 <!-- faces -->
 <polygon points="662,469 833,508 828,649 658,611" fill="#9a9bbb"/>
 <polygon points="833,508 985.7,350.5 982,490 828,649" fill="#696a80"/>
 <polygon points="833,508 823,472 949.3,342 955.9,334.3 985.7,350.5" fill="#80809c"/>
 <polygon points="662,469 816,310.4 827.7,304.5 955.9,334.3 949.3,342 819.2,313.5 692,445" fill="#bdbde6"/>
 <polygon points="692,445 819.2,313.5 949.3,342 823,472" fill="#b9b9e0"/>
 <polygon points="662,469 692,445 823,472 833,508" fill="#ffffff"/>
 <!-- pocket -->
 <polygon points="820.3,343.5 819.4,423.8 809.4,433.2 747.2,419.3" fill="#696a80"/>
 <polygon points="820.3,343.5 905,362.5 841,428.8 819.4,423.8" fill="#9a9bbb"/>
 <polygon points="819.4,423.8 841,428.8 831,438.2 809.4,433.2" fill="#b9b9e0"/>
 <g fill="none" stroke="#000" stroke-width="2" stroke-linejoin="miter">
  <polygon points="820.3,343.5 905,362.5 831,438.2 747.2,419.3"/>
  <polyline points="820.3,343.5 819.4,423.8 841,428.8"/>
  <line x1="819.4" y1="423.8" x2="809.4" y2="433.2"/>
  <polyline points="662,469 658,611 828,649 982,490 985.7,350.5"/>
  <line x1="833" y1="508" x2="828" y2="649"/>
 </g>
 <!-- axes -->
 <g fill="none" stroke="#ffffff" stroke-width="1">
  <polyline points="813.5,369 812,452 896,472.6"/>
  <line x1="812" y1="452" x2="797" y2="468"/>
  <polyline points="799,420 799,437 785,451"/>
  <polyline points="842.5,401 842.5,429 873,437"/>
  <polyline points="824,477.5 829,473.3 859,481"/>
 </g>
 <circle cx="811.5" cy="452.3" r="2" fill="#fff"/>
 <polyline points="813,362.5 818,362.5 813.5,368.5 818,369.5" fill="none" stroke="#fff" stroke-width="1"/>
 <text x="897" y="474" font-family="Liberation Sans" font-size="10" fill="#fff">y</text>
 <!-- orange edges -->
 <g fill="none" stroke="#ff8a10" stroke-width="1.4" stroke-linejoin="round">
  <polygon points="662,469 692,445 823,472 833,508"/>
  <polyline points="692,445 819.2,313.5 949.3,342 823,472"/>
  <polyline points="662,469 816,310.4 827.7,304.5 955.9,334.3 985.7,350.5 833,508"/>
  <polyline points="816,310.4 819.2,313.5"/>
  <polyline points="955.9,334.3 949.3,342 985.7,350.5"/>
 </g>
</svg>


<!-- CONTEXT MENU -->
<div id="cm"><div id="cmi"></div><div id="cmw"></div><div id="cmb"></div></div>
<div class="mi" style="top:349px"><span class="t">C<u>e</u>nter graph</span></div>
<div class="mi" style="top:373px"><span class="t"><u>R</u>eframe On</span></div>
<div class="mi" style="top:397px"><svg class="abs" style="left:4px;top:2px" width="20" height="20"><use href="#i-hide"/></svg><span class="t"><u>H</u>ide/Show</span></div>
<div class="mi" style="top:421px"><svg class="abs" style="left:3px;top:2px" width="20" height="20"><use href="#i-props"/></svg><span class="t">Pr<u>o</u>perties</span><span class="k">Alt+Enter</span></div>
<div class="mi" style="top:445px"><svg class="abs" style="left:4px;top:2px" width="20" height="20"><use href="#i-subtree"/></svg><span class="t">Ope<u>n</u> Sub-Tree</span></div>
<div class="sep" style="top:472px"></div>
<div class="mi" style="top:478px"><span class="t">Defi<u>n</u>e In Work Object</span></div>
<div class="sep" style="top:505px"></div>
<div class="mi" style="top:511px"><svg class="abs" style="left:4px;top:2px" width="20" height="20"><use href="#i-cut"/></svg><span class="t">Cu<u>t</u></span><span class="k">Ctrl+X</span></div>
<div class="mi" style="top:535px"><svg class="abs" style="left:3px;top:1px" width="22" height="22"><use href="#i-copy"/></svg><span class="t"><u>C</u>opy</span><span class="k">Ctrl+C</span></div>
<div class="mi" style="top:559px"><svg class="abs" style="left:3px;top:1px" width="22" height="22"><use href="#i-paste"/></svg><span class="t"><u>P</u>aste</span><span class="k">Ctrl+V</span></div>
<div class="mi" style="top:583px"><span class="t">Paste <u>S</u>pecial...</span></div>
<div class="sep" style="top:610px"></div>
<div class="mi" style="top:616px"><span class="t"><u>D</u>elete</span><span class="k">Del</span></div>
<div class="sep" style="top:643px"></div>
<div class="mi" style="top:649px"><span class="t">P<u>a</u>rents/Children...</span></div>
<div class="mi" style="top:673px"><svg class="abs" style="left:3px;top:2px" width="22" height="22"><use href="#i-update"/></svg><span class="t"><u>L</u>ocal Update</span></div>
<div class="mi" style="top:697px"><span class="t">Replace...</span></div>
<div class="sep" style="top:724px"></div>
<div class="mi" style="top:730px"><span class="t">Cha<u>m</u>fer.1 object</span><svg class="abs" style="left:169px;top:7px" width="5" height="8"><polygon points="0,0 4.5,4 0,8" fill="#000"/></svg></div>

</body></html>
